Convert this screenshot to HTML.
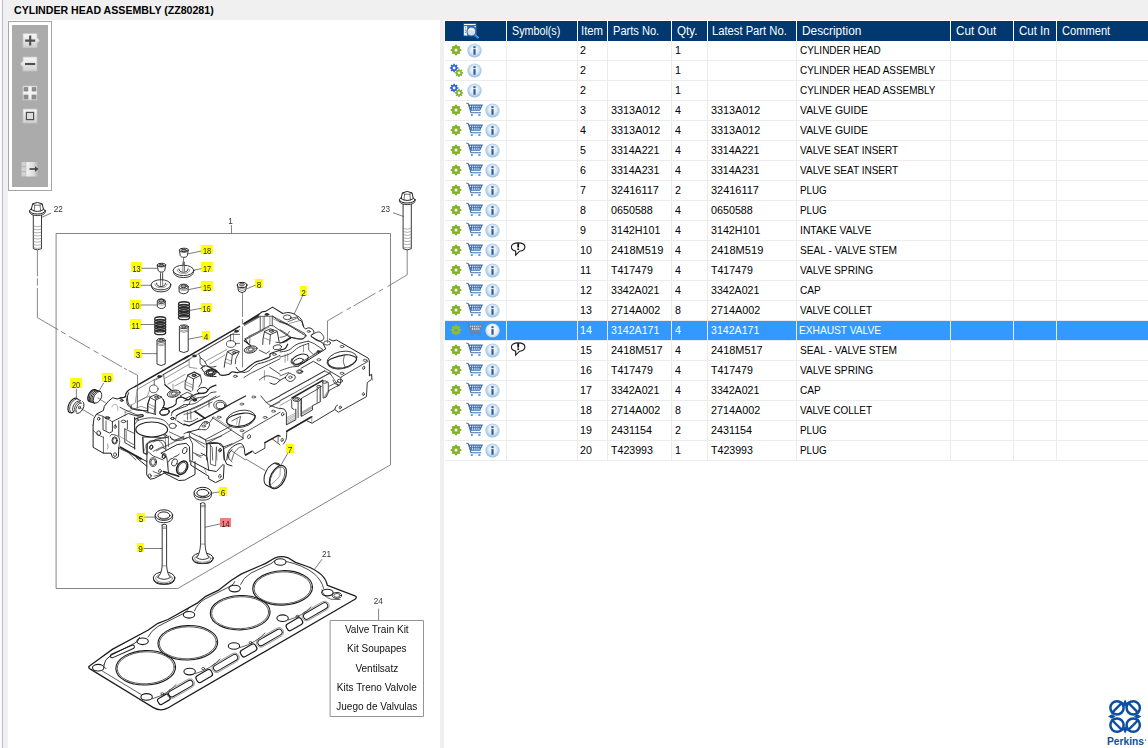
<!DOCTYPE html><html><head><meta charset="utf-8"><title>Parts</title><style>html,body{margin:0;padding:0;}
body{width:1148px;height:748px;overflow:hidden;background:#f0f0f0;position:relative;font-family:"Liberation Sans",sans-serif;font-size:11px;color:#000;}
div,svg{position:absolute;}
.title{height:16px;line-height:16px;font-weight:bold;font-size:11px;white-space:nowrap;transform-origin:0 0;}
#leftpanel{left:8px;top:20px;width:432px;height:728px;background:#fff;}
#leftedge{left:0;top:0;width:2px;height:748px;background:#fbfbfb;border-right:1px solid #bcbccb;}
#rightpanel{left:444px;top:20px;width:704px;height:728px;background:#fff;}
#thead{left:445px;top:21px;width:703px;height:20px;background:#00386f;}
.hs{top:21px;width:1px;height:20px;background:#fff;}
.vs{top:41px;width:1px;height:420px;background:#ececec;}
.hl{left:445px;width:703px;height:1px;background:#ececec;}
.ht{height:20px;line-height:20px;color:#fff;white-space:nowrap;font-size:12px;transform-origin:0 0;}
.ct{height:20px;line-height:20px;white-space:nowrap;transform-origin:0 0;}
.sel{color:#fff;}
.selrow{left:445px;width:703px;height:19px;background:#3399ff;}
.selsep{width:1px;height:19px;background:#ececec;}
.ic{overflow:visible;}
</style></head><body>
<svg width="0" height="0" style="position:absolute"><defs>
<radialGradient id="gi" cx="50%" cy="45%" r="55%"><stop offset="0" stop-color="#ffffff"/><stop offset="0.5" stop-color="#e2ecf6"/><stop offset="0.8" stop-color="#b0cee8"/><stop offset="1" stop-color="#86b5de"/></radialGradient>
<linearGradient id="gb" x1="0" y1="0" x2="0" y2="1"><stop offset="0" stop-color="#f6f6f6"/><stop offset="0.5" stop-color="#e6e6e6"/><stop offset="1" stop-color="#cfcfcf"/></linearGradient>
<linearGradient id="gb2" x1="0" y1="0" x2="1" y2="0"><stop offset="0" stop-color="#f4f4f4"/><stop offset="0.6" stop-color="#dcdcdc"/><stop offset="1" stop-color="#ababab"/></linearGradient>
<g id="i-gear"><path d="M10.05 4.89 L11.22 5.09 L11.22 6.91 L10.05 7.11 L9.65 8.08 L10.34 9.05 L9.05 10.34 L8.08 9.65 L7.11 10.05 L6.91 11.22 L5.09 11.22 L4.89 10.05 L3.92 9.65 L2.95 10.34 L1.66 9.05 L2.35 8.08 L1.95 7.11 L0.78 6.91 L0.78 5.09 L1.95 4.89 L2.35 3.92 L1.66 2.95 L2.95 1.66 L3.92 2.35 L4.89 1.95 L5.09 0.78 L6.91 0.78 L7.11 1.95 L8.08 2.35 L9.05 1.66 L10.34 2.95 L9.65 3.92Z" fill="#7fb325"/><circle cx="6" cy="6" r="1.55" fill="#fff"/></g>
<g id="i-gear-sel"><path d="M10.05 4.89 L11.22 5.09 L11.22 6.91 L10.05 7.11 L9.65 8.08 L10.34 9.05 L9.05 10.34 L8.08 9.65 L7.11 10.05 L6.91 11.22 L5.09 11.22 L4.89 10.05 L3.92 9.65 L2.95 10.34 L1.66 9.05 L2.35 8.08 L1.95 7.11 L0.78 6.91 L0.78 5.09 L1.95 4.89 L2.35 3.92 L1.66 2.95 L2.95 1.66 L3.92 2.35 L4.89 1.95 L5.09 0.78 L6.91 0.78 L7.11 1.95 L8.08 2.35 L9.05 1.66 L10.34 2.95 L9.65 3.92Z" fill="#8fbe2c"/><circle cx="6" cy="6" r="1.5" fill="#4f9de8"/></g>
<g id="i-gears"><path d="M8.09 4.18 L9.34 4.26 L9.34 5.74 L8.09 5.82 L7.79 6.54 L8.62 7.47 L7.57 8.52 L6.64 7.69 L5.92 7.99 L5.84 9.24 L4.36 9.24 L4.28 7.99 L3.56 7.69 L2.63 8.52 L1.58 7.47 L2.41 6.54 L2.11 5.82 L0.86 5.74 L0.86 4.26 L2.11 4.18 L2.41 3.46 L1.58 2.53 L2.63 1.48 L3.56 2.31 L4.28 2.01 L4.36 0.76 L5.84 0.76 L5.92 2.01 L6.64 2.31 L7.57 1.48 L8.62 2.53 L7.79 3.46Z" fill="#2f5fe0"/><circle cx="5.1" cy="5.0" r="1.4" fill="#fff"/><path d="M12.89 9.11 L14.14 9.18 L14.14 10.62 L12.89 10.69 L12.61 11.39 L13.44 12.32 L12.42 13.34 L11.49 12.51 L10.79 12.79 L10.72 14.04 L9.28 14.04 L9.21 12.79 L8.51 12.51 L7.58 13.34 L6.56 12.32 L7.39 11.39 L7.11 10.69 L5.86 10.62 L5.86 9.18 L7.11 9.11 L7.39 8.41 L6.56 7.48 L7.58 6.46 L8.51 7.29 L9.21 7.01 L9.28 5.76 L10.72 5.76 L10.79 7.01 L11.49 7.29 L12.42 6.46 L13.44 7.48 L12.61 8.41Z" fill="#7fb325"/><circle cx="10.0" cy="9.9" r="1.4" fill="#fff"/></g>
<g id="i-info"><circle cx="7.5" cy="7.5" r="7.1" fill="url(#gi)"/><rect x="6.4" y="3.2" width="2.2" height="2" fill="#2d5c9f"/><rect x="6.4" y="6.1" width="2.2" height="5.6" fill="#2d5c9f"/></g>
<radialGradient id="gis" cx="50%" cy="45%" r="55%"><stop offset="0" stop-color="#ffffff"/><stop offset="0.6" stop-color="#f1f4f7"/><stop offset="0.9" stop-color="#cfdae4"/><stop offset="1" stop-color="#b4c6d6"/></radialGradient>
<g id="i-info-sel"><circle cx="7.5" cy="7.5" r="7.1" fill="url(#gis)"/><rect x="6.4" y="3.2" width="2.2" height="2" fill="#2d5c9f"/><rect x="6.4" y="6.1" width="2.2" height="5.6" fill="#2d5c9f"/></g>
<g id="i-cart" fill="none" stroke="#3f6ea8" stroke-width="1.1"><path d="M0.3 0.9 L2.3 1.6 L5.0 10.8 L15.0 10.8" /><path d="M3.0 3.1 L16.2 3.1 L13.8 8.2 L4.9 8.2 Z" fill="#dfe9f5"/><path d="M5.6 3.4V7.8M7.7 3.4V7.8M9.8 3.4V7.8M11.9 3.4V7.8M13.8 3.4V6.8" stroke-width="1"/><path d="M3.8 5.6H15" stroke-width="0.8"/><rect x="4.8" y="12.2" width="2" height="1.7" fill="#3d8de0" stroke="none"/><rect x="12.4" y="12.2" width="2" height="1.7" fill="#3d8de0" stroke="none"/></g>
<g id="i-cart-sel" fill="none" stroke="#6a7f98" stroke-width="1.1"><path d="M0.3 0.9 L2.3 1.6 L5.0 10.8 L15.0 10.8" /><path d="M3.0 3.1 L16.2 3.1 L13.8 8.2 L4.9 8.2 Z" fill="#e8eef5"/><path d="M5.6 3.4V7.8M7.7 3.4V7.8M9.8 3.4V7.8M11.9 3.4V7.8M13.8 3.4V6.8" stroke-width="1"/><path d="M3.8 5.6H15" stroke-width="0.8"/><rect x="4.8" y="12.2" width="2" height="1.7" fill="#5a87b8" stroke="none"/><rect x="12.4" y="12.2" width="2" height="1.7" fill="#5a87b8" stroke="none"/></g>
<g id="i-bubble"><path d="M8.1 1.9 C12.3 1.9 14.9 3.6 14.9 6 C14.9 8.2 12.6 9.8 9.6 10.2 L5.6 14.2 L5.7 10.1 C3 9.6 1.4 8 1.4 6 C1.4 3.6 4 1.9 8.1 1.9 Z" fill="#fff" stroke="#1a1a1a" stroke-width="1.1"/><rect x="7.3" y="2.2" width="1.8" height="4.4" fill="#111"/><rect x="7.3" y="7.4" width="1.8" height="1.6" fill="#111"/></g>
<g id="i-search"><rect x="0.3" y="0.3" width="13.2" height="12.9" fill="#1f78cf"/><rect x="1" y="1" width="11.6" height="1" fill="#fff"/><rect x="1.1" y="3.1" width="3" height="9.3" fill="#fff"/><rect x="11.5" y="3" width="1.2" height="1.2" fill="#fff"/><path d="M2.2 4.3h0.8M2.2 6h0.8M2.2 7.7h0.8M2.2 9.4h0.8" stroke="#1f5fae" stroke-width="0.8"/><line x1="11.2" y1="11.7" x2="15.4" y2="15.2" stroke="#2d7fd6" stroke-width="2"/><line x1="11.8" y1="11.3" x2="15.9" y2="14.7" stroke="#9cc0ea" stroke-width="0.7"/><circle cx="8.4" cy="8.5" r="4.5" fill="#dcdde0" stroke="#1d62b8" stroke-width="1.1"/><path d="M6 6.6 Q8 5.2 10.6 7.2" stroke="#fff" stroke-width="1.2" fill="none"/></g>
</defs></svg>
<div id="leftedge"></div><div id="leftpanel"></div><div id="rightpanel"></div>
<div id="t1" class="title" style="left:13.59px;top:2px;transform:scaleX(0.9626);">CYLINDER HEAD ASSEMBLY (ZZ80281)</div>
<svg style="left:8px;top:21px" width="44" height="170" viewBox="8 21 44 170">
<rect x="8.5" y="21.5" width="43" height="169" fill="#fff" stroke="#a6a6a6"/>
<rect x="12" y="25" width="36" height="162" fill="#ababab"/>
<!-- plus -->
<path d="M23 33.5H37V37.5L39.6 40.5L37 43.5V47.5H23Z" fill="url(#gb)" stroke="#c4c4c4" stroke-width="0.8"/>
<path d="M25.2 40.6H35.2M30.2 35.6V45.6" stroke="#4f4f4f" stroke-width="2.1"/>
<!-- minus -->
<path d="M37 57H23V61L20.4 64L23 67V71H37Z" fill="url(#gb)" stroke="#c4c4c4" stroke-width="0.8"/>
<path d="M25 64H35.2" stroke="#4f4f4f" stroke-width="2.1"/>
<!-- grid -->
<rect x="23" y="86" width="14" height="14" fill="url(#gb)" stroke="#c4c4c4" stroke-width="0.8"/>
<path d="M29.2 86.4H30.8V99.6H29.2ZM23.4 92.2H36.6V93.8H23.4Z" fill="#f6f6f6"/><path d="M24.2 87.4H27.8V91H24.2ZM32.2 87.4H35.8V91H32.2ZM24.2 95.2H27.8V98.8H24.2ZM32.2 95.2H35.8V98.8H32.2Z" fill="#8e8e8e" stroke="#707070" stroke-width="0.6"/>
<!-- square -->
<rect x="23" y="109" width="14" height="14" fill="url(#gb)" stroke="#c4c4c4" stroke-width="0.8"/>
<rect x="26.4" y="112.4" width="7.2" height="7.2" fill="#dcdcdc" stroke="#4e4e4e" stroke-width="1.2"/>
<!-- list arrow -->
<rect x="26" y="162" width="12.5" height="14.5" fill="url(#gb2)"/>
<path d="M21.5 162H26V166.3H21.5ZM21.5 167H26V171.3H21.5ZM21.5 172H26V176.3H21.5Z" fill="#d4d4d4" stroke="#bdbdbd" stroke-width="0.7"/>
<path d="M29.5 169H36" stroke="#444" stroke-width="1.6"/>
<path d="M35 166.2L38.4 169L35 171.8Z" fill="#444"/>
</svg>

<svg id="diagram" style="left:8px;top:190px;will-change:transform;opacity:0.999;font-family:'Liberation Sans',sans-serif" width="432" height="558" viewBox="8 190 432 558" fill="none" stroke-linecap="round" stroke-linejoin="round">
<path d="M120.0 397.9C120.9 397.8 124.1 397.8 125.1 397.1C126.1 396.4 125.4 394.8 126.0 393.6C126.6 392.5 127.0 391.4 128.6 390.2C130.1 389.0 134.3 387.0 135.4 386.4" stroke="#222" stroke-width="1.2" fill="none"/>
<path d="M135.4 386.4L188.4 356.0" stroke="#222" stroke-width="1.5" fill="none"/>
<path d="M137.1 389.5L191.0 358.6" stroke="#444" stroke-width="0.6" fill="none"/>
<path d="M128.6 392.8C128.3 393.8 127.1 396.9 126.8 398.8C126.6 400.6 126.6 402.3 127.3 403.9C128.0 405.5 129.5 407.2 131.1 408.2C132.8 409.2 134.4 409.6 137.1 410.1C139.8 410.5 145.7 410.6 147.4 410.8" stroke="#222" stroke-width="1.0" fill="none"/>
<path d="M131.1 405.6L135.4 402.6L137.1 389.4" stroke="#555" stroke-width="0.6" fill="none"/>
<path d="M131.1 408.2L131.1 404.8" stroke="#222" stroke-width="0.6" fill="none"/>
<ellipse cx="159.4" cy="376.5" rx="1.9" ry="1.0" stroke="#222" stroke-width="0.8" fill="#333"/>
<ellipse cx="121.7" cy="400.5" rx="1.5" ry="0.9" stroke="#222" stroke-width="0.8" fill="none"/>
<path d="M163.6 374.4L188.4 360.3" stroke="#222" stroke-width="0.7" fill="none"/>
<path d="M164.9 378.4L188.4 364.7" stroke="#555" stroke-width="0.6" fill="none"/>
<path d="M154.2 380.0L154.2 384.7" stroke="#222" stroke-width="0.7" fill="none"/>
<path d="M163.6 374.4L164.9 384.7" stroke="#222" stroke-width="0.7" fill="none"/>
<path d="M155.5 380.0L162.8 375.9" stroke="#222" stroke-width="0.6" fill="none"/>
<ellipse cx="153.8" cy="388.9" rx="4.3" ry="3.9" stroke="#222" stroke-width="0.7" fill="none"/>
<path d="M149.5 390.2L147.4 396.2L137.1 402.2" stroke="#555" stroke-width="0.6" fill="none"/>
<path d="M164.9 384.7L171.3 390.2" stroke="#222" stroke-width="1.2" fill="none"/>
<path d="M167.9 384.2L185.0 374.4" stroke="#555" stroke-width="0.6" fill="none"/>
<path d="M173.0 384.2L173.0 388.9" stroke="#555" stroke-width="0.6" fill="none"/>
<path d="M174.8 385.9L185.9 380.0" stroke="#555" stroke-width="0.6" fill="none"/>
<path d="M149.9 397.1L155.9 394.5L161.9 397.1L155.5 400.1Z" stroke="#222" stroke-width="0.9" fill="#fff"/>
<ellipse cx="156.4" cy="397.2" rx="1.9" ry="1.1" stroke="#222" stroke-width="0.8" fill="#bbb"/>
<path d="M149.9 397.8L147.6 403.9L147.4 411.2" stroke="#222" stroke-width="0.9" fill="none"/>
<path d="M155.5 400.3L154.9 407.3L154.2 413.5" stroke="#222" stroke-width="0.8" fill="none"/>
<path d="M161.9 397.8C162.4 398.6 164.3 401.0 164.5 402.6C164.7 404.2 163.4 406.6 163.2 407.3" stroke="#222" stroke-width="0.9" fill="none"/>
<path d="M148.7 403.9L154.7 406.9" stroke="#555" stroke-width="0.6" fill="none"/>
<path d="M148.2 406.5L154.2 409.5" stroke="#555" stroke-width="0.6" fill="none"/>
<path d="M187.6 375.3L194.0 372.3L200.4 375.3L193.6 378.7Z" stroke="#222" stroke-width="0.9" fill="#fff"/>
<ellipse cx="194.0" cy="375.5" rx="1.9" ry="1.1" stroke="#222" stroke-width="0.8" fill="#bbb"/>
<path d="M187.6 375.9L185.2 382.5L185.0 388.5L191.0 391.5" stroke="#222" stroke-width="0.9" fill="none"/>
<path d="M193.6 378.9L192.7 390.2" stroke="#222" stroke-width="0.8" fill="none"/>
<path d="M200.4 375.9C200.6 376.9 201.7 379.8 201.5 381.7C201.2 383.5 199.2 386.1 198.7 387.0" stroke="#222" stroke-width="0.9" fill="none"/>
<path d="M186.3 382.1L192.9 385.3" stroke="#555" stroke-width="0.6" fill="none"/>
<path d="M185.9 384.7L192.7 387.8" stroke="#555" stroke-width="0.6" fill="none"/>
<ellipse cx="173.7" cy="393.6" rx="6.5" ry="3.4" stroke="#222" stroke-width="0.9" fill="none" transform="rotate(-12 173.7 393.6)"/>
<ellipse cx="173.7" cy="393.6" rx="4.6" ry="2.4" stroke="#222" stroke-width="0.55" fill="none" transform="rotate(-12 173.7 393.6)"/>
<ellipse cx="173.7" cy="393.6" rx="2.8" ry="1.5" stroke="#222" stroke-width="0.7" fill="none" transform="rotate(-12 173.7 393.6)"/>
<ellipse cx="164.5" cy="412.0" rx="5.0" ry="2.8" stroke="#222" stroke-width="0.9" fill="none" transform="rotate(-10 164.5 412.0)"/>
<ellipse cx="202.6" cy="390.4" rx="5.1" ry="2.9" stroke="#222" stroke-width="0.9" fill="none" transform="rotate(-10 202.6 390.4)"/>
<ellipse cx="210.9" cy="372.3" rx="4.7" ry="2.6" stroke="#222" stroke-width="0.9" fill="none" transform="rotate(-10 210.9 372.3)"/>
<ellipse cx="210.9" cy="372.3" rx="3.1" ry="1.7" stroke="#222" stroke-width="0.8" fill="none" transform="rotate(-10 210.9 372.3)"/>
<path d="M202.1 368.8C202.5 369.4 203.0 371.0 204.3 372.3C205.6 373.5 207.9 375.4 209.8 376.1C211.8 376.8 215.0 376.5 216.0 376.5" stroke="#222" stroke-width="1.0" fill="none"/>
<path d="M200.4 357.7C201.1 358.3 203.7 360.0 204.7 361.1C205.7 362.3 205.4 363.6 206.4 364.6C207.4 365.6 209.1 366.8 210.7 367.1C212.3 367.4 215.1 366.4 216.0 366.3" stroke="#222" stroke-width="0.9" fill="none"/>
<path d="M162.8 407.3C163.6 407.5 165.8 408.9 167.9 408.4C170.1 407.9 174.2 405.9 175.6 404.3C177.1 402.8 175.6 400.4 176.6 399.2C177.6 398.0 179.6 397.1 181.6 397.2C183.6 397.3 186.9 399.9 188.4 399.8C190.0 399.8 189.8 397.9 191.2 396.9C192.6 395.9 194.6 394.5 197.0 393.8C199.4 393.1 203.4 393.8 205.6 392.8C207.7 391.8 208.3 389.1 210.0 387.8C211.8 386.5 215.0 385.5 216.0 385.1" stroke="#222" stroke-width="1.2" fill="none"/>
<path d="M171.3 415.5C171.7 414.7 171.8 412.1 173.2 410.9C174.6 409.7 177.4 409.4 179.9 408.4C182.4 407.4 186.7 406.2 188.4 404.9C190.2 403.7 189.2 401.8 190.6 400.7C192.0 399.5 194.4 398.8 197.0 398.1C199.6 397.4 204.1 397.1 206.4 396.2C208.7 395.3 209.1 393.5 210.7 392.8C212.3 392.1 215.1 392.1 216.0 391.9" stroke="#222" stroke-width="0.9" fill="none"/>
<path d="M175.6 420.0C175.9 419.2 175.8 416.4 177.3 415.0C178.9 413.6 182.5 412.8 185.0 411.6C187.6 410.5 189.3 409.8 192.7 408.2C196.1 406.6 201.7 404.2 205.6 402.2C209.4 400.2 214.3 397.2 216.0 396.2" stroke="#222" stroke-width="0.8" fill="none"/>
<ellipse cx="194.6" cy="400.1" rx="1.7" ry="1.0" stroke="#222" stroke-width="0.8" fill="#333"/>
<ellipse cx="172.4" cy="418.5" rx="1.9" ry="1.0" stroke="#222" stroke-width="0.8" fill="none"/>
<path d="M180.3 396.2L185.0 398.8L192.7 394.9L187.6 392.4Z" stroke="#222" stroke-width="0.8" fill="none"/>
<path d="M195.3 411.2L203.9 417.6" stroke="#222" stroke-width="1.3" fill="none"/>
<path d="M187.6 411.6L187.6 420.0" stroke="#555" stroke-width="0.6" fill="none"/>
<path d="M191.0 410.8L191.0 420.0" stroke="#555" stroke-width="0.6" fill="none"/>
<path d="M209.0 400.5L209.0 407.3" stroke="#555" stroke-width="0.6" fill="none"/>
<path d="M120.0 407.3L125.1 409.9L137.1 415.0L143.1 415.0L142.7 416.7L137.1 416.9" stroke="#222" stroke-width="0.8" fill="none"/>
<path d="M125.1 410.8L125.1 415.9" stroke="#555" stroke-width="0.6" fill="none"/>
<path d="M184.0 358.8L239.6 326.3" stroke="#222" stroke-width="1.5" fill="none"/>
<path d="M243.9 323.9L258.4 316.0" stroke="#222" stroke-width="1.5" fill="none"/>
<path d="M185.7 361.1L239.6 329.7" stroke="#444" stroke-width="0.6" fill="none"/>
<ellipse cx="194.4" cy="356.0" rx="1.9" ry="1.0" stroke="#222" stroke-width="0.8" fill="#333"/>
<ellipse cx="236.4" cy="331.2" rx="1.9" ry="1.0" stroke="#222" stroke-width="0.8" fill="#333"/>
<path d="M198.5 354.1C198.8 354.6 199.8 355.4 200.1 357.1C200.4 358.7 199.6 362.3 200.3 363.9C200.9 365.5 203.5 366.1 204.1 366.5" stroke="#222" stroke-width="0.8" fill="none"/>
<path d="M189.1 359.8L189.1 367.3L196.8 368.4" stroke="#555" stroke-width="0.6" fill="none"/>
<path d="M199.0 353.6L231.9 334.4L239.6 334.4" stroke="#222" stroke-width="0.7" fill="none"/>
<path d="M230.6 334.4L230.6 341.0" stroke="#222" stroke-width="0.7" fill="none"/>
<path d="M233.5 334.4L233.5 341.0" stroke="#555" stroke-width="0.6" fill="none"/>
<ellipse cx="231.1" cy="344.0" rx="4.7" ry="3.4" stroke="#222" stroke-width="0.7" fill="none"/>
<path d="M205.4 361.3L226.8 349.5" stroke="#555" stroke-width="0.6" fill="none"/>
<path d="M209.7 364.1L225.1 354.9" stroke="#555" stroke-width="0.6" fill="none"/>
<path d="M235.3 343.4L239.6 343.4" stroke="#222" stroke-width="0.6" fill="none"/>
<path d="M227.6 351.5L233.6 349.6L239.2 351.5L232.8 354.7Z" stroke="#222" stroke-width="0.9" fill="#fff"/>
<ellipse cx="234.1" cy="352.6" rx="1.9" ry="1.0" stroke="#222" stroke-width="0.8" fill="#bbb"/>
<path d="M227.2 352.4L225.2 360.5L224.2 367.3" stroke="#222" stroke-width="0.9" fill="none"/>
<path d="M232.3 355.0L231.2 363.9" stroke="#222" stroke-width="0.8" fill="none"/>
<path d="M239.2 351.9L235.8 358.8L235.3 363.9" stroke="#222" stroke-width="0.8" fill="none"/>
<path d="M225.9 358.8L231.5 361.3" stroke="#555" stroke-width="0.6" fill="none"/>
<path d="M225.2 362.2L231.1 364.6" stroke="#555" stroke-width="0.6" fill="none"/>
<ellipse cx="250.7" cy="349.5" rx="6.5" ry="3.4" stroke="#222" stroke-width="0.9" fill="none" transform="rotate(-12 250.7 349.5)"/>
<ellipse cx="210.7" cy="372.5" rx="6.5" ry="3.4" stroke="#222" stroke-width="0.9" fill="none" transform="rotate(-12 210.7 372.5)"/>
<ellipse cx="250.7" cy="349.5" rx="4.6" ry="2.4" stroke="#222" stroke-width="0.55" fill="none" transform="rotate(-12 250.7 349.5)"/>
<ellipse cx="210.7" cy="372.5" rx="4.6" ry="2.4" stroke="#222" stroke-width="0.55" fill="none" transform="rotate(-12 210.7 372.5)"/>
<ellipse cx="250.7" cy="349.5" rx="2.8" ry="1.5" stroke="#222" stroke-width="0.7" fill="none" transform="rotate(-12 250.7 349.5)"/>
<ellipse cx="210.7" cy="372.5" rx="2.8" ry="1.5" stroke="#222" stroke-width="0.7" fill="none" transform="rotate(-12 210.7 372.5)"/>
<path d="M244.3 340.8L249.0 344.2L250.7 345.5" stroke="#222" stroke-width="1.2" fill="none"/>
<path d="M201.1 368.4C201.7 367.9 203.1 366.0 204.5 365.8C206.0 365.6 207.4 366.2 209.7 367.3C212.0 368.5 216.3 371.3 218.2 372.6C220.1 374.0 219.3 374.9 221.0 375.2C222.7 375.5 226.6 374.9 228.5 374.4C230.3 373.8 230.6 372.1 232.1 371.8C233.5 371.5 235.3 372.8 237.2 372.6C239.2 372.5 241.9 371.8 243.9 370.8C245.9 369.7 247.3 367.9 249.2 366.5C251.1 365.1 253.2 363.2 255.2 362.2C257.2 361.2 258.8 361.3 261.2 360.5C263.6 359.6 268.0 358.2 269.6 357.1C271.1 355.9 268.8 354.8 270.6 353.6C272.3 352.5 278.4 350.8 280.0 350.2" stroke="#222" stroke-width="1.2" fill="none"/>
<path d="M236.2 367.3C236.6 367.9 237.5 369.9 238.8 370.8C240.0 371.6 242.2 372.5 243.9 372.5C245.6 372.5 247.6 371.6 249.0 370.8C250.5 369.9 251.0 368.5 252.4 367.3C253.9 366.2 255.6 364.8 257.6 363.9C259.6 363.1 261.9 363.1 264.4 362.2C267.0 361.3 270.4 359.9 273.0 358.8C275.6 357.6 278.8 355.9 280.0 355.4" stroke="#222" stroke-width="0.9" fill="none"/>
<path d="M243.9 377.6C245.0 376.9 247.9 374.9 250.7 373.3C253.6 371.8 256.1 370.6 261.0 368.2C265.9 365.8 276.8 360.3 280.0 358.8" stroke="#222" stroke-width="0.8" fill="none"/>
<path d="M264.4 331.4L270.6 328.8L277.4 331.4L270.6 334.5Z" stroke="#222" stroke-width="0.9" fill="#fff"/>
<ellipse cx="271.3" cy="331.2" rx="2.1" ry="1.1" stroke="#222" stroke-width="0.8" fill="#bbb"/>
<path d="M264.4 332.1L263.1 338.2L262.7 344.4" stroke="#222" stroke-width="0.9" fill="none"/>
<path d="M270.4 334.8L269.6 344.2" stroke="#222" stroke-width="0.8" fill="none"/>
<path d="M277.4 332.1L279.1 341.7" stroke="#222" stroke-width="0.9" fill="none"/>
<path d="M263.6 337.8L270.0 340.4" stroke="#555" stroke-width="0.6" fill="none"/>
<path d="M244.7 340.1L263.6 330.1" stroke="#222" stroke-width="0.7" fill="none"/>
<path d="M244.3 324.6L259.5 316.2" stroke="#555" stroke-width="0.6" fill="none"/>
<path d="M249.9 337.4L249.9 342.5" stroke="#555" stroke-width="0.6" fill="none"/>
<path d="M260.1 316.0L260.1 330.1" stroke="#555" stroke-width="0.6" fill="none"/>
<path d="M264.4 316.0L264.4 328.8" stroke="#555" stroke-width="0.6" fill="none"/>
<path d="M272.1 316.0L272.1 325.0" stroke="#555" stroke-width="0.6" fill="none"/>
<path d="M273.0 318.6L280.0 322.4" stroke="#555" stroke-width="0.6" fill="none"/>
<ellipse cx="274.3" cy="354.3" rx="1.9" ry="1.0" stroke="#222" stroke-width="0.8" fill="none"/>
<ellipse cx="235.3" cy="376.3" rx="1.9" ry="1.0" stroke="#222" stroke-width="0.8" fill="none"/>
<ellipse cx="194.1" cy="375.2" rx="1.9" ry="1.0" stroke="#222" stroke-width="0.8" fill="none"/>
<path d="M187.4 375.2L194.3 371.8L200.4 375.0" stroke="#222" stroke-width="0.8" fill="none"/>
<path d="M259.3 350.2L266.1 353.6L269.6 351.1" stroke="#222" stroke-width="0.8" fill="none"/>
<ellipse cx="277.3" cy="347.2" rx="4.3" ry="2.4" stroke="#222" stroke-width="0.8" fill="none" transform="rotate(-10 277.3 347.2)"/>
<path d="M264.4 370.8L264.4 380.0" stroke="#555" stroke-width="0.6" fill="none"/>
<path d="M269.6 367.3L280.0 374.2" stroke="#222" stroke-width="0.8" fill="none"/>
<path d="M259.3 380.0C260.4 379.3 263.6 376.3 266.1 375.9C268.7 375.5 272.4 376.9 274.7 377.6C277.0 378.3 279.1 379.6 280.0 380.0" stroke="#222" stroke-width="0.8" fill="none"/>
<path d="M329.2 339.1L333.0 341.0L336.5 340.0L368.1 358.1L369.4 360.7L369.4 375.9L371.6 374.2L372.0 380.0" stroke="#222" stroke-width="1.0" fill="none"/>
<path d="M368.1 361.3L340.7 377.2" stroke="#222" stroke-width="0.8" fill="none"/>
<ellipse cx="327.1" cy="343.0" rx="3.4" ry="2.1" stroke="#222" stroke-width="0.8" fill="none"/>
<ellipse cx="342.0" cy="360.1" rx="15.2" ry="8.6" stroke="#222" stroke-width="0.8" fill="none" transform="rotate(-12 342.0 360.1)"/>
<path d="M327.9 362.6C327.6 361.2 328.5 360.1 331.3 358.8C334.2 357.5 341.3 355.4 345.0 354.9C348.7 354.5 351.7 355.5 353.6 356.2C355.5 356.9 356.7 357.9 356.6 359.2C356.4 360.5 354.9 362.5 352.7 363.9C350.5 365.3 346.6 367.2 343.3 367.8C340.0 368.3 335.6 368.2 333.0 367.3C330.5 366.5 328.2 364.1 327.9 362.6Z" stroke="#222" stroke-width="1.1" fill="none"/>
<path d="M344.3 356.2C344.2 357.1 343.2 359.5 343.3 361.3C343.5 363.2 344.9 366.3 345.2 367.3" stroke="#222" stroke-width="0.7" fill="none"/>
<ellipse cx="342.0" cy="346.5" rx="1.9" ry="1.1" stroke="#222" stroke-width="0.7" fill="none"/>
<ellipse cx="365.1" cy="360.3" rx="1.9" ry="1.1" stroke="#222" stroke-width="0.7" fill="none"/>
<ellipse cx="342.0" cy="373.3" rx="1.9" ry="1.1" stroke="#222" stroke-width="0.7" fill="none"/>
<ellipse cx="318.9" cy="359.8" rx="1.9" ry="1.1" stroke="#222" stroke-width="0.7" fill="none"/>
<ellipse cx="363.7" cy="367.8" rx="1.0" ry="1.7" stroke="#222" stroke-width="0.7" fill="none" transform="rotate(20 363.7 367.8)"/>
<path d="M298.0 316.0C298.6 316.7 301.0 318.7 301.8 320.3C302.7 321.8 302.5 324.0 303.1 325.4C303.7 326.8 304.3 328.4 305.2 328.8C306.2 329.2 307.5 327.7 308.7 327.8C309.9 327.9 311.7 328.4 312.5 329.3C313.4 330.1 314.0 331.7 313.8 332.7C313.6 333.7 311.7 334.8 311.2 335.3" stroke="#222" stroke-width="1.0" fill="none"/>
<path d="M311.2 335.3C312.1 334.8 314.9 332.9 316.4 332.4C317.9 332.0 319.0 331.7 320.2 332.4C321.4 333.1 323.2 335.3 323.6 336.5C324.1 337.8 323.8 339.4 322.8 340.1C321.8 340.8 319.6 341.4 317.6 340.8C315.7 340.2 312.3 337.2 311.2 336.5" stroke="#222" stroke-width="0.9" fill="none"/>
<path d="M311.2 336.5L322.8 343.0L325.8 348.9L298.4 366.1" stroke="#222" stroke-width="1.0" fill="none"/>
<path d="M308.2 341.2L314.2 343.6L322.8 349.5L298.0 364.1" stroke="#222" stroke-width="0.8" fill="none"/>
<path d="M280.0 351.9C281.4 351.7 285.7 351.5 288.6 350.2C291.4 348.9 293.8 345.7 297.1 344.2C300.4 342.7 306.4 341.7 308.2 341.2" stroke="#222" stroke-width="0.9" fill="none"/>
<path d="M280.0 357.1C281.7 356.5 287.1 355.3 290.3 353.6C293.4 352.0 295.8 348.9 298.8 347.2C301.9 345.5 307.0 344.0 308.7 343.4" stroke="#222" stroke-width="0.8" fill="none"/>
<path d="M303.5 345.1L303.5 351.9" stroke="#555" stroke-width="0.6" fill="none"/>
<path d="M308.7 343.8L308.7 350.2L313.4 354.5L317.6 351.9" stroke="#222" stroke-width="0.7" fill="none"/>
<ellipse cx="318.5" cy="351.5" rx="1.5" ry="0.9" stroke="#222" stroke-width="0.8" fill="#444"/>
<ellipse cx="300.1" cy="359.2" rx="8.6" ry="4.4" stroke="#222" stroke-width="1.0" fill="none" transform="rotate(-20 300.1 359.2)"/>
<ellipse cx="298.4" cy="361.3" rx="5.1" ry="2.7" stroke="#222" stroke-width="0.8" fill="none" transform="rotate(-20 298.4 361.3)"/>
<path d="M292.0 358.8C291.8 359.4 290.7 361.1 291.1 362.2C291.6 363.3 293.3 365.0 294.5 365.6C295.8 366.3 297.8 366.0 298.4 366.1" stroke="#222" stroke-width="1.0" fill="none"/>
<ellipse cx="299.7" cy="371.6" rx="3.1" ry="1.9" stroke="#222" stroke-width="0.8" fill="none"/>
<ellipse cx="299.7" cy="371.6" rx="1.9" ry="1.1" stroke="#222" stroke-width="0.7" fill="none"/>
<ellipse cx="290.3" cy="377.2" rx="1.7" ry="1.2" stroke="#222" stroke-width="0.7" fill="none"/>
<path d="M301.0 368.2L313.4 361.3L339.9 377.2" stroke="#222" stroke-width="0.9" fill="none"/>
<path d="M308.2 380.0L324.5 370.8" stroke="#222" stroke-width="0.7" fill="none"/>
<path d="M316.8 380.0L330.5 372.6" stroke="#222" stroke-width="0.7" fill="none"/>
<path d="M324.5 370.8L331.3 375.0" stroke="#555" stroke-width="0.6" fill="none"/>
<ellipse cx="287.3" cy="317.3" rx="3.9" ry="2.4" stroke="#222" stroke-width="0.8" fill="none"/>
<ellipse cx="308.7" cy="331.4" rx="1.5" ry="0.9" stroke="#222" stroke-width="0.8" fill="none"/>
<path d="M280.0 321.1C281.7 322.0 286.7 324.3 290.3 326.3C293.8 328.3 298.8 331.5 301.4 333.1C304.0 334.7 305.0 335.3 305.7 335.7" stroke="#222" stroke-width="0.9" fill="none"/>
<path d="M280.0 329.7C281.1 330.4 285.0 332.7 286.8 334.0C288.7 335.3 290.4 336.8 291.1 337.4" stroke="#222" stroke-width="0.8" fill="none"/>
<path d="M280.0 343.4C280.9 343.0 283.3 341.8 285.1 340.8C287.0 339.8 288.4 337.6 291.1 337.4C293.8 337.1 299.0 339.6 301.4 339.3C303.8 339.0 305.0 336.3 305.7 335.7" stroke="#222" stroke-width="0.9" fill="none"/>
<path d="M280.0 337.4C281.0 337.1 284.4 336.7 286.0 335.7C287.6 334.7 288.8 332.1 289.4 331.4" stroke="#222" stroke-width="0.7" fill="none"/>
<path d="M287.7 344.2C287.3 344.9 286.4 347.5 285.1 348.5C283.9 349.5 280.9 349.9 280.0 350.2" stroke="#222" stroke-width="1.2" fill="none"/>
<path d="M285.1 354.5L285.1 362.2" stroke="#555" stroke-width="0.6" fill="none"/>
<path d="M287.7 353.6L287.7 360.5" stroke="#555" stroke-width="0.6" fill="none"/>
<path d="M280.0 370.8C281.7 370.2 287.4 368.0 290.3 367.3C293.1 366.6 296.0 366.6 297.1 366.5" stroke="#222" stroke-width="0.8" fill="none"/>
<path d="M280.0 375.9L288.6 372.5" stroke="#222" stroke-width="0.7" fill="none"/>
<path d="M290.3 318.6L297.1 316.9" stroke="#222" stroke-width="0.7" fill="none"/>
<path d="M286.8 431.3L311.7 416.8" stroke="#222" stroke-width="1.7" fill="none"/>
<path d="M311.7 416.8L311.8 422.8" stroke="#777" stroke-width="0.6" fill="none"/>
<path d="M307.4 421.1L312.1 423.2L334.8 409.5L335.8 406.5L337.5 405.2" stroke="#222" stroke-width="0.9" fill="none"/>
<path d="M334.8 409.5L338.4 412.3L366.4 396.7L367.3 382.6L370.7 380.0" stroke="#222" stroke-width="0.9" fill="none"/>
<ellipse cx="340.3" cy="407.4" rx="1.0" ry="1.5" stroke="#222" stroke-width="0.7" fill="none" transform="rotate(20 340.3 407.4)"/>
<ellipse cx="363.4" cy="394.1" rx="1.0" ry="1.5" stroke="#222" stroke-width="0.7" fill="none" transform="rotate(20 363.4 394.1)"/>
<path d="M286.8 431.3C286.7 432.6 286.7 436.9 286.2 439.0C285.6 441.1 283.9 443.2 283.4 444.0" stroke="#222" stroke-width="0.9" fill="none"/>
<ellipse cx="282.1" cy="439.9" rx="1.0" ry="1.7" stroke="#222" stroke-width="0.7" fill="none" transform="rotate(20 282.1 439.9)"/>
<ellipse cx="282.6" cy="414.2" rx="1.2" ry="1.7" stroke="#222" stroke-width="0.7" fill="none" transform="rotate(20 282.6 414.2)"/>
<path d="M280.0 408.2L284.3 409.1L286.4 412.5L286.4 424.9L295.8 419.8L295.8 409.1" stroke="#222" stroke-width="0.9" fill="none"/>
<path d="M286.8 417.6L295.8 412.9" stroke="#666" stroke-width="0.5" fill="none"/>
<path d="M286.8 419.2L295.8 414.5" stroke="#666" stroke-width="0.5" fill="none"/>
<path d="M286.8 420.7L295.8 416.0" stroke="#666" stroke-width="0.5" fill="none"/>
<path d="M286.8 422.3L295.8 417.6" stroke="#666" stroke-width="0.5" fill="none"/>
<path d="M286.8 423.8L295.8 419.1" stroke="#666" stroke-width="0.5" fill="none"/>
<ellipse cx="296.7" cy="399.5" rx="3.9" ry="1.9" stroke="#222" stroke-width="0.9" fill="none"/>
<ellipse cx="296.7" cy="399.5" rx="1.9" ry="0.9" stroke="#222" stroke-width="0.7" fill="none"/>
<path d="M291.6 400.1L291.8 408.2L294.1 409.5" stroke="#222" stroke-width="0.8" fill="none"/>
<path d="M298.1 401.4L298.1 417.6" stroke="#222" stroke-width="0.8" fill="none"/>
<path d="M300.7 400.1L300.7 415.9" stroke="#555" stroke-width="0.6" fill="none"/>
<path d="M301.4 398.4L301.4 416.4L312.5 409.9L312.5 405.7L320.2 401.8L320.2 386.8" stroke="#222" stroke-width="0.9" fill="none"/>
<path d="M301.4 398.4L318.5 388.6" stroke="#222" stroke-width="0.8" fill="none"/>
<path d="M302.1 414.2L312.3 408.2" stroke="#666" stroke-width="0.5" fill="none"/>
<path d="M302.1 413.5L312.3 407.5" stroke="#666" stroke-width="0.5" fill="none"/>
<path d="M302.1 412.7L312.3 406.7" stroke="#666" stroke-width="0.5" fill="none"/>
<path d="M302.1 411.9L312.3 405.9" stroke="#666" stroke-width="0.5" fill="none"/>
<path d="M292.0 398.0L322.8 380.4" stroke="#222" stroke-width="1.5" fill="none"/>
<ellipse cx="318.9" cy="386.4" rx="2.1" ry="1.0" stroke="#222" stroke-width="0.8" fill="none"/>
<path d="M317.2 387.3L317.2 402.4" stroke="#222" stroke-width="0.7" fill="none"/>
<path d="M320.6 387.3L320.6 401.6" stroke="#555" stroke-width="0.6" fill="none"/>
<ellipse cx="324.9" cy="382.1" rx="2.4" ry="1.2" stroke="#222" stroke-width="0.8" fill="none"/>
<path d="M322.8 382.6L323.2 398.1L326.2 397.1L328.9 391.1" stroke="#222" stroke-width="0.8" fill="none"/>
<path d="M328.3 382.6L328.3 391.1" stroke="#222" stroke-width="0.8" fill="none"/>
<path d="M324.1 397.5L326.6 392.8" stroke="#666" stroke-width="0.5" fill="none"/>
<path d="M324.9 397.0L327.3 392.3" stroke="#666" stroke-width="0.5" fill="none"/>
<path d="M325.8 396.5L328.0 391.8" stroke="#666" stroke-width="0.5" fill="none"/>
<path d="M326.6 396.0L328.7 391.3" stroke="#666" stroke-width="0.5" fill="none"/>
<path d="M280.0 395.4L308.2 380.0" stroke="#222" stroke-width="0.7" fill="none"/>
<path d="M280.0 400.5L292.0 394.1" stroke="#555" stroke-width="0.6" fill="none"/>
<path d="M280.0 405.4L291.1 399.3" stroke="#555" stroke-width="0.6" fill="none"/>
<path d="M327.9 391.1L339.0 385.1" stroke="#222" stroke-width="0.8" fill="none"/>
<path d="M328.8 386.4L338.2 381.7" stroke="#222" stroke-width="0.7" fill="none"/>
<ellipse cx="339.9" cy="380.9" rx="2.6" ry="1.7" stroke="#222" stroke-width="0.8" fill="none"/>
<path d="M333.0 380.0C333.3 380.6 333.8 382.6 334.8 383.4C335.8 384.3 338.3 384.8 339.0 385.1" stroke="#222" stroke-width="0.8" fill="none"/>
<path d="M184.0 411.4C185.9 410.8 191.0 409.7 195.1 408.0C199.3 406.3 204.7 403.1 208.8 401.1C212.9 399.1 218.1 396.9 219.9 396.0" stroke="#222" stroke-width="0.8" fill="none"/>
<path d="M184.0 424.2L189.1 425.9L195.1 422.7L204.5 418.4L212.2 414.4L219.9 410.1L231.9 403.3L245.6 396.0" stroke="#222" stroke-width="1.3" fill="none"/>
<path d="M194.3 411.4L201.1 416.1L205.4 418.4" stroke="#222" stroke-width="1.1" fill="none"/>
<path d="M184.0 414.4C185.4 414.0 189.7 413.3 192.6 412.3C195.4 411.2 197.8 409.7 201.1 408.0C204.4 406.3 210.4 403.0 212.2 402.0" stroke="#222" stroke-width="0.7" fill="none"/>
<ellipse cx="220.4" cy="405.4" rx="4.3" ry="3.3" stroke="#222" stroke-width="0.9" fill="none"/>
<ellipse cx="219.9" cy="405.0" rx="6.2" ry="4.7" stroke="#222" stroke-width="0.8" fill="none"/>
<path d="M187.4 412.3L187.4 419.1" stroke="#555" stroke-width="0.6" fill="none"/>
<path d="M190.4 411.0L190.4 418.2" stroke="#555" stroke-width="0.6" fill="none"/>
<path d="M208.8 401.1L209.2 406.3" stroke="#555" stroke-width="0.6" fill="none"/>
<path d="M184.0 420.8C185.1 421.0 188.6 422.1 190.8 421.7C193.1 421.3 196.5 419.0 197.7 418.4" stroke="#222" stroke-width="0.8" fill="none"/>
<path d="M212.2 417.4L243.0 437.9" stroke="#222" stroke-width="0.8" fill="none"/>
<path d="M213.5 416.5L231.9 428.9" stroke="#666" stroke-width="0.6" fill="none"/>
<path d="M243.0 433.6L243.0 438.8" stroke="#222" stroke-width="0.8" fill="none"/>
<path d="M243.9 433.2L280.0 412.3" stroke="#222" stroke-width="0.8" fill="none"/>
<path d="M189.1 431.9L205.4 439.6L231.9 425.5" stroke="#222" stroke-width="0.8" fill="none"/>
<path d="M205.4 439.6L206.4 443.9" stroke="#222" stroke-width="0.8" fill="none"/>
<path d="M208.8 442.6L231.1 430.2" stroke="#222" stroke-width="0.7" fill="none"/>
<path d="M224.2 448.4L243.0 438.8" stroke="#222" stroke-width="0.8" fill="none"/>
<ellipse cx="240.9" cy="418.9" rx="14.7" ry="8.4" stroke="#222" stroke-width="0.8" fill="none" transform="rotate(-12 240.9 418.9)"/>
<path d="M226.8 420.8C227.1 419.3 229.1 417.4 231.9 416.1C234.8 414.8 240.5 413.4 243.9 413.1C247.3 412.8 250.6 413.7 252.4 414.4C254.3 415.1 255.6 415.9 255.0 417.4C254.4 418.9 251.7 421.9 249.0 423.4C246.3 424.9 241.9 426.1 238.8 426.4C235.6 426.7 232.2 426.0 230.2 425.1C228.2 424.2 226.5 422.3 226.8 420.8Z" stroke="#222" stroke-width="1.1" fill="none"/>
<path d="M231.9 421.0L240.6 416.3L238.8 425.3" stroke="#222" stroke-width="0.7" fill="none"/>
<path d="M237.5 417.8L236.6 424.2" stroke="#888" stroke-width="0.6" fill="none"/>
<ellipse cx="219.1" cy="417.2" rx="1.9" ry="1.0" stroke="#222" stroke-width="0.7" fill="none"/>
<ellipse cx="241.8" cy="404.1" rx="1.9" ry="1.0" stroke="#222" stroke-width="0.7" fill="none"/>
<ellipse cx="265.1" cy="417.4" rx="1.9" ry="1.0" stroke="#222" stroke-width="0.7" fill="none"/>
<ellipse cx="242.0" cy="430.7" rx="1.9" ry="1.0" stroke="#222" stroke-width="0.7" fill="none"/>
<ellipse cx="273.4" cy="411.2" rx="1.9" ry="1.0" stroke="#222" stroke-width="0.7" fill="none"/>
<ellipse cx="253.7" cy="397.0" rx="1.9" ry="1.0" stroke="#222" stroke-width="0.7" fill="none"/>
<ellipse cx="249.0" cy="436.6" rx="1.4" ry="2.1" stroke="#222" stroke-width="0.7" fill="none" transform="rotate(25 249.0 436.6)"/>
<ellipse cx="203.7" cy="426.1" rx="1.7" ry="1.0" stroke="#222" stroke-width="0.7" fill="none"/>
<ellipse cx="205.8" cy="423.2" rx="1.7" ry="1.0" stroke="#222" stroke-width="0.7" fill="none"/>
<path d="M198.5 429.4C198.5 428.6 200.1 426.4 201.1 425.1C202.1 423.8 203.3 421.9 204.5 421.5C205.8 421.1 208.0 421.8 208.8 422.5C209.6 423.3 209.6 424.8 209.2 425.9C208.8 427.1 207.7 428.9 206.4 429.5C205.1 430.1 202.9 429.6 201.5 429.5C200.2 429.5 198.6 430.1 198.5 429.4Z" stroke="#222" stroke-width="0.9" fill="none"/>
<path d="M187.4 432.4L198.5 429.4" stroke="#222" stroke-width="1.0" fill="none"/>
<path d="M209.7 422.5L213.1 417.8" stroke="#222" stroke-width="0.8" fill="none"/>
<path d="M264.9 442.6L278.1 435.4L280.0 436.2" stroke="#222" stroke-width="1.4" fill="none"/>
<path d="M264.9 442.6L264.9 448.2L255.0 453.8L252.4 450.8L245.6 455.0" stroke="#222" stroke-width="0.9" fill="none"/>
<path d="M245.6 455.0L251.6 451.6" stroke="#222" stroke-width="1.6" fill="none"/>
<path d="M278.1 435.4L278.1 442.2" stroke="#222" stroke-width="0.7" fill="none"/>
<path d="M272.1 438.8L280.0 444.8" stroke="#222" stroke-width="0.8" fill="none"/>
<path d="M226.8 460.0C227.1 458.6 227.4 453.9 228.5 451.6C229.6 449.3 231.6 447.4 233.6 446.1C235.6 444.7 238.8 443.3 240.5 443.5C242.2 443.7 243.2 445.6 243.9 447.3C244.6 449.1 244.7 453.0 244.9 454.2" stroke="#222" stroke-width="1.0" fill="none"/>
<path d="M231.9 460.0C232.3 458.7 233.2 454.6 234.5 452.5C235.8 450.4 238.2 448.2 239.6 447.3C241.0 446.5 242.5 447.3 243.0 447.3" stroke="#222" stroke-width="0.7" fill="none"/>
<path d="M231.5 450.8L245.6 460.0" stroke="#444" stroke-width="0.7" fill="none"/>
<path d="M206.7 443.5L206.7 460.0" stroke="#222" stroke-width="0.9" fill="none"/>
<path d="M206.7 443.5C207.6 443.3 210.0 442.6 212.2 442.6C214.4 442.6 218.1 442.7 219.9 443.5C221.8 444.3 222.6 444.6 223.4 447.3C224.1 450.1 224.1 457.9 224.2 460.0" stroke="#222" stroke-width="1.0" fill="none"/>
<ellipse cx="219.9" cy="450.3" rx="1.3" ry="1.7" stroke="#222" stroke-width="0.7" fill="none" transform="rotate(20 219.9 450.3)"/>
<path d="M209.7 444.8L212.2 447.3L212.7 460.0" stroke="#222" stroke-width="0.7" fill="none"/>
<path d="M216.5 447.3L216.9 460.0" stroke="#555" stroke-width="0.6" fill="none"/>
<path d="M184.0 433.6L188.3 431.9" stroke="#222" stroke-width="0.8" fill="none"/>
<path d="M184.0 438.8L189.1 437.1L192.6 443.9L192.6 460.0" stroke="#222" stroke-width="0.8" fill="none"/>
<path d="M189.1 431.9L190.0 437.1L205.4 444.3" stroke="#222" stroke-width="0.7" fill="none"/>
<path d="M192.6 452.5L201.1 455.9L204.5 454.2" stroke="#222" stroke-width="0.7" fill="none"/>
<path d="M261.0 396.0C261.7 396.9 263.7 399.6 265.3 401.1C266.9 402.7 268.0 404.1 270.4 405.4C272.9 406.7 278.4 408.3 280.0 408.8" stroke="#222" stroke-width="0.9" fill="none"/>
<path d="M266.1 402.8L280.0 396.0" stroke="#222" stroke-width="0.7" fill="none"/>
<path d="M269.6 407.1L280.0 402.0" stroke="#222" stroke-width="0.7" fill="none"/>
<path d="M184.0 401.1C184.9 400.8 187.3 400.1 189.1 399.4C191.0 398.7 194.1 397.3 195.1 396.9" stroke="#222" stroke-width="0.9" fill="none"/>
<ellipse cx="194.7" cy="399.9" rx="1.9" ry="1.0" stroke="#222" stroke-width="0.8" fill="#444"/>
<path d="M184.0 404.6C185.7 404.4 191.4 404.6 194.3 403.7C197.1 402.8 199.1 400.7 201.1 399.4C203.1 398.1 205.4 396.6 206.2 396.0" stroke="#222" stroke-width="0.8" fill="none"/>
<path d="M93.1 425.1L94.0 418.2L96.6 414.0L103.4 410.5L104.3 406.3L108.5 401.1L112.8 397.7L117.1 399.0L123.9 397.3L125.6 396.0" stroke="#222" stroke-width="1.0" fill="none"/>
<path d="M93.1 425.1L93.1 447.3L103.4 453.2L111.1 453.2L112.4 457.2L115.4 458.5L118.4 456.7L118.8 447.3" stroke="#222" stroke-width="1.0" fill="none"/>
<path d="M103.4 437.1L103.4 453.2" stroke="#222" stroke-width="0.7" fill="none"/>
<ellipse cx="98.7" cy="418.7" rx="1.2" ry="1.5" stroke="#222" stroke-width="0.8" fill="none" transform="rotate(15 98.7 418.7)"/>
<ellipse cx="98.7" cy="433.2" rx="1.9" ry="2.4" stroke="#222" stroke-width="0.9" fill="none"/>
<path d="M96.6 414.4L102.5 416.1L112.4 421.7" stroke="#222" stroke-width="0.7" fill="none"/>
<path d="M103.0 416.5L103.0 429.8L109.4 433.0L112.4 431.5L112.4 421.7" stroke="#222" stroke-width="0.9" fill="none"/>
<path d="M106.0 420.8L106.0 430.2" stroke="#222" stroke-width="0.7" fill="none"/>
<ellipse cx="107.3" cy="417.8" rx="2.4" ry="1.2" stroke="#222" stroke-width="0.8" fill="none"/>
<ellipse cx="106.1" cy="417.8" rx="0.8" ry="0.6" stroke="#222" stroke-width="0.6" fill="none"/>
<ellipse cx="108.4" cy="417.8" rx="0.8" ry="0.6" stroke="#222" stroke-width="0.6" fill="none"/>
<path d="M112.4 421.7L128.2 413.5L135.9 415.7L142.8 414.4L143.6 416.1L135.9 418.7" stroke="#222" stroke-width="0.9" fill="none"/>
<path d="M118.8 420.8L118.8 436.2" stroke="#222" stroke-width="0.9" fill="none"/>
<path d="M127.4 420.4L127.4 428.9" stroke="#222" stroke-width="0.8" fill="none"/>
<ellipse cx="123.5" cy="421.4" rx="2.4" ry="1.2" stroke="#222" stroke-width="0.8" fill="none"/>
<path d="M115.4 424.2L115.4 426.8" stroke="#222" stroke-width="0.6" fill="none"/>
<ellipse cx="115.2" cy="426.8" rx="1.2" ry="1.7" stroke="#222" stroke-width="0.7" fill="none"/>
<path d="M93.1 430.2C93.7 430.8 95.3 432.6 96.6 433.6C97.8 434.6 99.7 435.6 100.8 436.2C102.0 436.8 103.0 436.9 103.4 437.1" stroke="#222" stroke-width="0.7" fill="none"/>
<path d="M107.7 443.9L108.1 447.3L107.3 449.0" stroke="#555" stroke-width="0.6" fill="none"/>
<ellipse cx="151.7" cy="429.5" rx="15.9" ry="7.5" stroke="#222" stroke-width="1.2" fill="none"/>
<path d="M134.6 424.2C135.4 423.5 136.6 421.0 139.3 420.0C142.1 418.9 147.3 417.8 151.3 417.8C155.3 417.8 160.4 418.7 163.3 420.0C166.1 421.2 167.6 424.2 168.4 425.1" stroke="#222" stroke-width="0.8" fill="none"/>
<path d="M134.6 417.4L134.6 449.0" stroke="#222" stroke-width="1.1" fill="none"/>
<path d="M124.8 428.9L124.8 442.6L134.9 448.4" stroke="#222" stroke-width="0.9" fill="none"/>
<path d="M124.8 428.9L134.6 433.6" stroke="#222" stroke-width="0.7" fill="none"/>
<path d="M126.5 431.1L126.5 440.5L134.2 444.8" stroke="#666" stroke-width="0.6" fill="none"/>
<path d="M119.7 436.2L134.9 445.6" stroke="#666" stroke-width="0.6" fill="none"/>
<ellipse cx="114.7" cy="440.5" rx="2.7" ry="3.6" stroke="#222" stroke-width="0.9" fill="none"/>
<ellipse cx="114.7" cy="440.5" rx="1.9" ry="2.6" stroke="#222" stroke-width="0.8" fill="none"/>
<ellipse cx="115.0" cy="454.6" rx="1.5" ry="1.9" stroke="#222" stroke-width="0.8" fill="none"/>
<path d="M110.2 436.2C110.5 435.9 110.7 434.5 112.0 434.5C113.2 434.5 116.7 435.2 117.9 436.2C119.2 437.2 119.5 438.6 119.7 440.5C119.8 442.3 118.9 446.2 118.8 447.3" stroke="#222" stroke-width="0.8" fill="none"/>
<path d="M120.5 447.3L141.0 458.9" stroke="#222" stroke-width="1.8" fill="none"/>
<path d="M118.8 448.2L128.2 452.5L135.9 460.0" stroke="#222" stroke-width="0.7" fill="none"/>
<path d="M142.8 437.1L143.6 452.5L147.0 454.6L147.0 443.9L156.4 439.2L167.6 437.2" stroke="#222" stroke-width="0.9" fill="none"/>
<path d="M142.8 437.1L165.0 437.9L168.4 437.1" stroke="#222" stroke-width="0.7" fill="none"/>
<path d="M144.5 450.8L146.2 443.9" stroke="#555" stroke-width="0.6" fill="none"/>
<ellipse cx="151.1" cy="447.3" rx="1.5" ry="2.2" stroke="#222" stroke-width="0.8" fill="none" transform="rotate(15 151.1 447.3)"/>
<path d="M153.0 442.2C153.9 441.9 156.6 440.2 158.2 440.5C159.7 440.8 161.6 442.8 162.4 443.9C163.3 445.1 163.2 446.8 163.3 447.3" stroke="#222" stroke-width="0.7" fill="none"/>
<path d="M156.4 450.8L161.6 448.2L184.0 437.1" stroke="#222" stroke-width="0.7" fill="none"/>
<path d="M165.4 433.6L165.4 447.3" stroke="#666" stroke-width="0.6" fill="none"/>
<path d="M168.4 436.2L168.4 446.5" stroke="#222" stroke-width="0.7" fill="none"/>
<ellipse cx="172.7" cy="418.4" rx="1.9" ry="1.1" stroke="#222" stroke-width="0.7" fill="none"/>
<ellipse cx="172.7" cy="425.9" rx="3.6" ry="2.6" stroke="#222" stroke-width="0.8" fill="none"/>
<ellipse cx="136.8" cy="419.3" rx="1.4" ry="0.9" stroke="#222" stroke-width="0.7" fill="none"/>
<ellipse cx="165.4" cy="435.5" rx="1.4" ry="0.9" stroke="#222" stroke-width="0.7" fill="none"/>
<ellipse cx="164.6" cy="412.3" rx="4.7" ry="3.0" stroke="#222" stroke-width="0.9" fill="none" transform="rotate(-10 164.6 412.3)"/>
<path d="M170.1 437.1L174.4 440.5L184.0 436.2" stroke="#222" stroke-width="0.8" fill="none"/>
<path d="M169.3 431.9L184.0 438.8" stroke="#222" stroke-width="0.7" fill="none"/>
<path d="M147.9 451.6L153.0 455.9L163.3 460.0" stroke="#222" stroke-width="0.8" fill="none"/>
<ellipse cx="164.1" cy="455.9" rx="1.9" ry="2.6" stroke="#222" stroke-width="0.8" fill="none" transform="rotate(15 164.1 455.9)"/>
<path d="M127.4 396.0C127.5 397.1 127.4 400.8 128.2 402.8C129.1 404.8 130.1 406.7 132.5 408.0C134.9 409.3 140.2 409.7 142.8 410.5C145.3 411.4 147.0 412.7 147.9 413.1" stroke="#222" stroke-width="0.9" fill="none"/>
<path d="M137.2 396.0L137.2 408.0" stroke="#555" stroke-width="0.6" fill="none"/>
<path d="M138.5 401.1L149.6 396.0" stroke="#555" stroke-width="0.6" fill="none"/>
<path d="M149.6 398.6L147.9 404.6L147.9 412.3L155.6 414.4" stroke="#222" stroke-width="0.9" fill="none"/>
<path d="M155.6 400.3L155.6 414.4" stroke="#222" stroke-width="0.7" fill="none"/>
<path d="M163.3 399.4C163.4 400.3 164.4 402.8 164.1 404.6C163.9 406.3 162.0 408.8 161.6 409.7" stroke="#222" stroke-width="0.9" fill="none"/>
<path d="M125.6 412.3L141.0 406.3L147.9 408.8" stroke="#555" stroke-width="0.6" fill="none"/>
<path d="M171.9 412.3C172.7 411.7 175.0 410.1 177.0 408.8C179.0 407.6 182.8 405.3 184.0 404.6" stroke="#222" stroke-width="1.0" fill="none"/>
<path d="M176.1 415.7L184.0 411.4" stroke="#222" stroke-width="0.9" fill="none"/>
<path d="M177.0 420.8L184.0 425.1" stroke="#222" stroke-width="1.0" fill="none"/>
<ellipse cx="121.8" cy="400.3" rx="1.2" ry="0.8" stroke="#222" stroke-width="0.7" fill="none"/>
<path d="M112.0 407.1C112.2 406.7 112.8 404.8 113.7 404.6C114.5 404.3 116.4 404.4 117.1 405.4C117.8 406.4 117.8 409.7 117.9 410.5" stroke="#777" stroke-width="0.6" fill="none"/>
<path d="M147.1 444.1L146.7 474.9L150.1 479.2L154.4 478.4L164.2 473.2" stroke="#222" stroke-width="1.0" fill="none"/>
<path d="M147.1 444.1C147.6 443.6 147.8 441.8 150.1 441.1C152.4 440.5 158.3 440.0 160.8 440.3C163.3 440.6 164.2 441.2 165.1 442.8C165.9 444.5 165.8 448.9 165.9 450.1" stroke="#222" stroke-width="0.9" fill="none"/>
<path d="M161.2 453.1L177.1 444.6L186.1 443.3L189.5 446.7L189.9 461.7" stroke="#222" stroke-width="1.0" fill="none"/>
<path d="M161.2 453.1L166.8 457.4L168.5 472.8" stroke="#222" stroke-width="0.9" fill="none"/>
<path d="M142.8 437.7L143.3 453.1L146.7 454.4" stroke="#222" stroke-width="0.8" fill="none"/>
<path d="M153.1 451.4L161.7 447.1L165.1 448.8" stroke="#222" stroke-width="0.7" fill="none"/>
<ellipse cx="151.4" cy="447.1" rx="1.4" ry="2.1" stroke="#222" stroke-width="0.8" fill="none" transform="rotate(20 151.4 447.1)"/>
<ellipse cx="163.8" cy="456.5" rx="1.4" ry="2.1" stroke="#222" stroke-width="0.8" fill="none" transform="rotate(20 163.8 456.5)"/>
<ellipse cx="153.1" cy="462.1" rx="3.4" ry="4.3" stroke="#222" stroke-width="0.9" fill="none"/>
<ellipse cx="153.1" cy="462.1" rx="2.3" ry="3.2" stroke="#222" stroke-width="0.8" fill="none"/>
<ellipse cx="149.7" cy="475.8" rx="1.5" ry="1.9" stroke="#222" stroke-width="0.8" fill="none"/>
<ellipse cx="160.0" cy="471.1" rx="1.3" ry="1.8" stroke="#222" stroke-width="0.8" fill="none" transform="rotate(15 160.0 471.1)"/>
<ellipse cx="184.8" cy="450.5" rx="2.1" ry="3.4" stroke="#222" stroke-width="0.8" fill="none" transform="rotate(25 184.8 450.5)"/>
<ellipse cx="174.5" cy="462.5" rx="2.6" ry="3.8" stroke="#222" stroke-width="0.8" fill="none" transform="rotate(25 174.5 462.5)"/>
<ellipse cx="182.2" cy="467.7" rx="5.0" ry="7.2" stroke="#222" stroke-width="1.4" fill="none" transform="rotate(30 182.2 467.7)"/>
<ellipse cx="182.2" cy="467.8" rx="3.8" ry="5.8" stroke="#222" stroke-width="0.8" fill="none" transform="rotate(30 182.2 467.8)"/>
<path d="M168.5 461.7L170.2 459.1L172.8 458.4L174.9 456.5L177.1 455.9L179.2 454.1" stroke="#222" stroke-width="0.9" fill="none"/>
<path d="M168.1 461.7L168.1 468.5" stroke="#666" stroke-width="0.6" fill="none"/>
<path d="M164.2 473.0L178.8 480.5L184.8 480.1L195.0 474.5L195.0 461.7" stroke="#222" stroke-width="1.0" fill="none"/>
<path d="M163.4 471.5L178.8 476.2" stroke="#222" stroke-width="1.5" fill="none"/>
<path d="M153.1 471.5L160.8 474.5L154.0 476.2" stroke="#222" stroke-width="0.7" fill="none"/>
<path d="M136.0 455.7L147.1 461.7" stroke="#222" stroke-width="1.0" fill="none"/>
<path d="M136.0 457.4L147.1 466.4" stroke="#222" stroke-width="1.0" fill="none"/>
<path d="M207.0 443.7L218.1 443.3L223.3 447.1L224.1 458.2L226.7 464.2L232.0 465.9" stroke="#222" stroke-width="1.0" fill="none"/>
<path d="M207.0 443.7L206.6 455.7" stroke="#222" stroke-width="0.9" fill="none"/>
<path d="M223.3 447.1L232.0 443.7" stroke="#222" stroke-width="0.8" fill="none"/>
<path d="M190.8 460.8L208.7 470.2L216.4 471.5L223.3 464.2" stroke="#222" stroke-width="1.0" fill="none"/>
<path d="M190.8 461.7L190.8 465.1L208.7 476.2L208.7 478.8L215.6 482.6L223.3 478.8L224.1 465.1" stroke="#222" stroke-width="1.0" fill="none"/>
<ellipse cx="220.3" cy="450.1" rx="1.0" ry="1.7" stroke="#222" stroke-width="0.7" fill="none" transform="rotate(15 220.3 450.1)"/>
<ellipse cx="219.9" cy="476.2" rx="1.2" ry="1.9" stroke="#222" stroke-width="0.7" fill="none" transform="rotate(15 219.9 476.2)"/>
<path d="M201.0 453.1L207.0 456.5L208.7 470.2" stroke="#222" stroke-width="0.9" fill="none"/>
<path d="M210.4 444.6L210.4 464.2L215.6 465.9L216.4 447.1" stroke="#222" stroke-width="0.7" fill="none"/>
<path d="M204.4 468.5L206.2 472.8" stroke="#555" stroke-width="0.6" fill="none"/>
<path d="M189.0 436.0L204.4 447.1" stroke="#222" stroke-width="0.7" fill="none"/>
<path d="M199.3 436.0L207.0 441.1L221.6 436.0" stroke="#222" stroke-width="0.7" fill="none"/>
<path d="M170.2 436.0C170.5 436.6 170.2 438.7 171.9 439.4C173.6 440.1 177.9 440.6 180.5 440.3C183.1 440.0 186.2 438.1 187.3 437.7" stroke="#222" stroke-width="0.8" fill="none"/>
<path d="M192.5 447.1L192.5 460.0" stroke="#666" stroke-width="0.6" fill="none"/>
<path d="M195.9 454.8L201.0 457.4" stroke="#222" stroke-width="0.7" fill="none"/>
<path d="M232.0 449.7C231.5 450.3 229.8 451.7 229.3 453.1C228.7 454.5 228.4 456.8 228.8 458.2C229.3 459.7 231.5 461.1 232.0 461.7" stroke="#222" stroke-width="1.0" fill="none"/>
<path d="M244.3 323.4L258.8 314.4" stroke="#222" stroke-width="1.5" fill="none"/>
<path d="M258.8 314.4L262.2 311.8L265.6 311.4L272.5 307.1L282.8 313.5" stroke="#222" stroke-width="1.1" fill="none"/>
<path d="M282.8 313.5C283.6 313.4 286.0 312.5 287.9 312.5C289.7 312.6 292.3 313.1 293.9 313.8C295.5 314.5 296.6 315.6 297.3 316.5C298.0 317.4 297.6 318.4 298.3 319.3C299.1 320.1 300.9 320.4 301.8 321.7C302.6 322.9 303.2 325.9 303.5 326.8" stroke="#222" stroke-width="1.0" fill="none"/>
<path d="M244.3 325.5L260.5 316.4L272.5 316.2L287.9 324.2" stroke="#222" stroke-width="0.7" fill="none"/>
<ellipse cx="266.9" cy="314.4" rx="1.9" ry="1.0" stroke="#222" stroke-width="0.8" fill="#333"/>
<path d="M260.5 316.5L260.5 329.5" stroke="#555" stroke-width="0.6" fill="none"/>
<path d="M263.1 316.5L263.1 328.7" stroke="#555" stroke-width="0.6" fill="none"/>
<path d="M269.9 316.5L269.9 325.3" stroke="#555" stroke-width="0.6" fill="none"/>
<path d="M272.5 316.5L272.5 325.3" stroke="#555" stroke-width="0.6" fill="none"/>
<path d="M287.9 321.7L296.4 318.4" stroke="#222" stroke-width="0.7" fill="none"/>
<path d="M289.6 323.4L299.0 320.8" stroke="#555" stroke-width="0.6" fill="none"/>
<path d="M272.5 316.2L281.0 322.5L287.9 324.2L305.0 333.6L306.3 336.2L303.3 338.8L296.4 338.8L289.6 337.1" stroke="#222" stroke-width="0.8" fill="none"/>
<path d="M245.1 338.8L269.9 325.5L273.3 325.9L289.6 337.1" stroke="#222" stroke-width="0.8" fill="none"/>
<path d="M245.1 338.8L248.5 344.1" stroke="#222" stroke-width="1.0" fill="none"/>
<path d="M249.4 340.5L249.4 344.9" stroke="#555" stroke-width="0.6" fill="none"/>
<path d="M248.5 336.2L269.1 327.2" stroke="#555" stroke-width="0.6" fill="none"/>
<path d="M282.8 342.2L290.5 338.1" stroke="#222" stroke-width="1.3" fill="none"/>
<path d="M275.9 342.2C277.1 342.3 280.8 342.9 282.8 342.6C284.8 342.3 287.0 340.8 287.9 340.5" stroke="#222" stroke-width="0.8" fill="none"/>
<path d="M285.4 377.4C285.8 376.2 288.1 373.7 289.3 373.3C290.4 372.8 291.5 374.2 292.4 374.6C293.4 375.0 294.6 374.9 295.0 375.7C295.4 376.4 295.4 378.1 294.6 379.1C293.9 380.1 292.0 381.3 290.7 381.5C289.5 381.7 288.0 380.8 287.1 380.1C286.2 379.4 285.0 378.5 285.4 377.4Z" stroke="#222" stroke-width="0.9" fill="none"/>
<path d="M270.0 401.3L324.8 371.0" stroke="#222" stroke-width="0.7" fill="none"/>
<path d="M270.0 406.5L329.9 373.1" stroke="#222" stroke-width="0.7" fill="none"/>
<path d="M341.0 377.4L340.3 384.2L337.6 386.1" stroke="#222" stroke-width="0.8" fill="none"/>
<path d="M329.9 373.1L333.3 378.2L338.4 385.9" stroke="#222" stroke-width="0.7" fill="none"/>
<path d="M270.0 382.9C270.9 383.2 273.4 384.7 275.1 384.2C276.8 383.8 278.6 381.3 280.3 380.1C282.0 379.0 284.5 377.8 285.4 377.4" stroke="#222" stroke-width="1.0" fill="none"/>
<path d="M324.8 371.0L329.9 373.1" stroke="#555" stroke-width="0.6" fill="none"/>
<path d="M231.5 225.5V233.5" stroke="#777" stroke-width="0.9" fill="none" />
<path d="M56.5 233.5H390.5V464.8L177.8 588.5H56.5Z" stroke="#777" stroke-width="0.9" fill="none" />
<text x="230.5" y="224.3" text-anchor="middle" font-size="8.2" fill="#333">1</text>
<path d="M33.3 214.0V248.7Q37.4 251.1 41.5 248.7V214.0" stroke="#222" stroke-width="0.9" fill="#fff" />
<path d="M33.3 226.0Q37.4 227.6 41.5 226.0" stroke="#777" stroke-width="0.6" fill="none" />
<path d="M33.3 229.1Q37.4 230.7 41.5 229.1" stroke="#777" stroke-width="0.6" fill="none" />
<path d="M33.3 232.2Q37.4 233.8 41.5 232.2" stroke="#777" stroke-width="0.6" fill="none" />
<path d="M33.3 235.3Q37.4 236.9 41.5 235.3" stroke="#777" stroke-width="0.6" fill="none" />
<path d="M33.3 238.4Q37.4 240.0 41.5 238.4" stroke="#777" stroke-width="0.6" fill="none" />
<path d="M33.3 241.5Q37.4 243.1 41.5 241.5" stroke="#777" stroke-width="0.6" fill="none" />
<path d="M33.3 244.6Q37.4 246.2 41.5 244.6" stroke="#777" stroke-width="0.6" fill="none" />
<path d="M33.3 247.7Q37.4 249.3 41.5 247.7" stroke="#777" stroke-width="0.6" fill="none" />
<path d="M29.6 210.8V212.2Q30.4 215.4 37.4 215.6Q44.4 215.4 45.2 212.2V210.8" stroke="#222" stroke-width="0.9" fill="#fff" />
<ellipse cx="37.4" cy="210.8" rx="7.8" ry="3.2" stroke="#222" stroke-width="1.0" fill="#fff"/>
<path d="M31.3 209.6L32.6 203.9Q37.4 201.0 42.2 203.9L43.5 209.6Q37.4 213.4 31.3 209.6Z" stroke="#222" stroke-width="1.0" fill="#fff" />
<path d="M32.6 203.9L34.8 205.2H40.0L42.2 203.9M34.8 205.2L34.1 211.1M40.0 205.2L40.7 211.1" stroke="#333" stroke-width="0.7" fill="none" />
<path d="M403.1 203.0V248.7Q407.2 251.1 411.3 248.7V203.0" stroke="#222" stroke-width="0.9" fill="#fff" />
<path d="M403.1 228.5Q407.2 230.1 411.3 228.5" stroke="#777" stroke-width="0.6" fill="none" />
<path d="M403.1 231.6Q407.2 233.2 411.3 231.6" stroke="#777" stroke-width="0.6" fill="none" />
<path d="M403.1 234.7Q407.2 236.3 411.3 234.7" stroke="#777" stroke-width="0.6" fill="none" />
<path d="M403.1 237.8Q407.2 239.4 411.3 237.8" stroke="#777" stroke-width="0.6" fill="none" />
<path d="M403.1 240.9Q407.2 242.5 411.3 240.9" stroke="#777" stroke-width="0.6" fill="none" />
<path d="M403.1 244.0Q407.2 245.6 411.3 244.0" stroke="#777" stroke-width="0.6" fill="none" />
<path d="M403.1 247.1Q407.2 248.7 411.3 247.1" stroke="#777" stroke-width="0.6" fill="none" />
<path d="M399.4 199.8V201.2Q400.2 204.4 407.2 204.6Q414.2 204.4 415.0 201.2V199.8" stroke="#222" stroke-width="0.9" fill="#fff" />
<ellipse cx="407.2" cy="199.8" rx="7.8" ry="3.2" stroke="#222" stroke-width="1.0" fill="#fff"/>
<path d="M401.1 198.6L402.4 192.9Q407.2 190.0 412.0 192.9L413.3 198.6Q407.2 202.4 401.1 198.6Z" stroke="#222" stroke-width="1.0" fill="#fff" />
<path d="M402.4 192.9L404.6 194.2H409.8L412.0 192.9M404.6 194.2L403.9 200.1M409.8 194.2L410.5 200.1" stroke="#333" stroke-width="0.7" fill="none" />
<text x="53.8" y="212.2" text-anchor="start" font-size="8.2" fill="#333">22</text>
<path d="M41.7 217.4L50.7 213.3" stroke="#444" stroke-width="0.7" />
<text x="381.0" y="212.2" text-anchor="start" font-size="8.2" fill="#333">23</text>
<path d="M393.4 212.9L403.4 216.4" stroke="#444" stroke-width="0.7" />
<path d="M37.4 250.6V275.9M37.4 278.7V285.2M37.4 288.4V317.6L58 329.6M61.3 331.5L65.4 334.1M69.2 336.4L89.8 348.3M93.9 350.8L98.2 353.2M101.9 355.4L121.6 366.7M124.5 368.4L126.5 369.5M129.1 370.8L137.5 375.3V408" stroke="#555" stroke-width="0.7" fill="none" />
<path d="M407.2 250.2V274.8L387.8 286.4M382.7 289.2L379 291.4M375.2 293.3L353.8 305.9M350.7 307.5L346.9 309.6M342.5 312.1L327.5 320.9V342.5" stroke="#555" stroke-width="0.7" fill="none" />
<rect x="201" y="245" width="12" height="9" fill="#ffff00"/>
<text x="207.0" y="253.5" text-anchor="middle" font-size="8.2" fill="#262626" textLength="8.2" lengthAdjust="spacingAndGlyphs">18</text>
<rect x="201" y="262" width="12" height="10" fill="#ffff00"/>
<text x="207.0" y="271.5" text-anchor="middle" font-size="8.2" fill="#262626" textLength="8.2" lengthAdjust="spacingAndGlyphs">17</text>
<rect x="131" y="262" width="11" height="10" fill="#ffff00"/>
<text x="136.5" y="271.5" text-anchor="middle" font-size="8.2" fill="#262626" textLength="8.2" lengthAdjust="spacingAndGlyphs">13</text>
<rect x="130" y="279" width="11" height="9" fill="#ffff00"/>
<text x="135.5" y="287.5" text-anchor="middle" font-size="8.2" fill="#262626" textLength="8.2" lengthAdjust="spacingAndGlyphs">12</text>
<rect x="201" y="281" width="12" height="10" fill="#ffff00"/>
<text x="207.0" y="290.5" text-anchor="middle" font-size="8.2" fill="#262626" textLength="8.2" lengthAdjust="spacingAndGlyphs">15</text>
<rect x="130" y="300" width="11" height="9" fill="#ffff00"/>
<text x="135.5" y="308.5" text-anchor="middle" font-size="8.2" fill="#262626" textLength="8.2" lengthAdjust="spacingAndGlyphs">10</text>
<rect x="201" y="303" width="11" height="9" fill="#ffff00"/>
<text x="206.5" y="311.5" text-anchor="middle" font-size="8.2" fill="#262626" textLength="8.2" lengthAdjust="spacingAndGlyphs">16</text>
<rect x="130" y="319" width="11" height="10" fill="#ffff00"/>
<text x="135.5" y="328.5" text-anchor="middle" font-size="8.2" fill="#262626" textLength="8.2" lengthAdjust="spacingAndGlyphs">11</text>
<rect x="255" y="279" width="8" height="9" fill="#ffff00"/>
<text x="259.0" y="287.5" text-anchor="middle" font-size="8.2" fill="#262626" textLength="4.6" lengthAdjust="spacingAndGlyphs">8</text>
<rect x="202" y="331" width="8" height="9" fill="#ffff00"/>
<text x="206.0" y="339.5" text-anchor="middle" font-size="8.2" fill="#262626" textLength="4.6" lengthAdjust="spacingAndGlyphs">4</text>
<rect x="134" y="349" width="8" height="9" fill="#ffff00"/>
<text x="138.0" y="357.5" text-anchor="middle" font-size="8.2" fill="#262626" textLength="4.6" lengthAdjust="spacingAndGlyphs">3</text>
<rect x="300" y="286" width="7" height="10" fill="#ffff00"/>
<text x="303.5" y="295.5" text-anchor="middle" font-size="8.2" fill="#262626" textLength="4.6" lengthAdjust="spacingAndGlyphs">2</text>
<rect x="102" y="373" width="11" height="9" fill="#ffff00"/>
<text x="107.5" y="381.5" text-anchor="middle" font-size="8.2" fill="#262626" textLength="8.2" lengthAdjust="spacingAndGlyphs">19</text>
<rect x="70" y="378" width="12" height="10" fill="#ffff00"/>
<text x="76.0" y="387.5" text-anchor="middle" font-size="8.2" fill="#262626" textLength="8.2" lengthAdjust="spacingAndGlyphs">20</text>
<rect x="286" y="444" width="8" height="9" fill="#ffff00"/>
<text x="290.0" y="452.5" text-anchor="middle" font-size="8.2" fill="#262626" textLength="4.6" lengthAdjust="spacingAndGlyphs">7</text>
<rect x="219" y="487" width="8" height="9" fill="#ffff00"/>
<text x="223.0" y="495.5" text-anchor="middle" font-size="8.2" fill="#262626" textLength="4.6" lengthAdjust="spacingAndGlyphs">6</text>
<rect x="137" y="513" width="8" height="9" fill="#ffff00"/>
<text x="141.0" y="521.5" text-anchor="middle" font-size="8.2" fill="#262626" textLength="4.6" lengthAdjust="spacingAndGlyphs">5</text>
<rect x="137" y="543" width="7" height="9" fill="#ffff00"/>
<text x="140.5" y="551.5" text-anchor="middle" font-size="8.2" fill="#262626" textLength="4.6" lengthAdjust="spacingAndGlyphs">9</text>
<rect x="220" y="518" width="11" height="9" fill="#f47c7c"/>
<text x="225.5" y="526.5" text-anchor="middle" font-size="8.2" fill="#262626" textLength="8.2" lengthAdjust="spacingAndGlyphs">14</text>
<path d="M188.2 253.8L201.0 251.1" stroke="#444" stroke-width="0.7" />
<path d="M193.9 270.2L201.0 268.7" stroke="#444" stroke-width="0.7" />
<path d="M142.0 268.3L157.3 268.3" stroke="#444" stroke-width="0.7" />
<path d="M141.1 285.3L151.2 285.3" stroke="#444" stroke-width="0.7" />
<path d="M188.2 289.7L201.0 287.1" stroke="#444" stroke-width="0.7" />
<path d="M141.1 305.0L157.3 305.0" stroke="#444" stroke-width="0.7" />
<path d="M190.1 310.4L201.0 308.3" stroke="#444" stroke-width="0.7" />
<path d="M141.1 324.5L154.2 324.5" stroke="#444" stroke-width="0.7" />
<path d="M246.9 288.8L255.1 285.3" stroke="#444" stroke-width="0.7" />
<path d="M188.2 339.2L202.0 336.6" stroke="#444" stroke-width="0.7" />
<path d="M142.0 353.6L157.0 353.6" stroke="#444" stroke-width="0.7" />
<path d="M302.3 296.4L294.2 314.0" stroke="#444" stroke-width="0.7" />
<path d="M211.5 493.2L219.0 492.0" stroke="#444" stroke-width="0.7" />
<path d="M205.2 527.2L219.9 524.0" stroke="#444" stroke-width="0.7" />
<path d="M145.1 517.1L154.9 517.1" stroke="#444" stroke-width="0.7" />
<path d="M144.1 548.5L162.1 548.5" stroke="#444" stroke-width="0.7" />
<path d="M183.5 258V270" stroke="#444" stroke-width="0.7" fill="none" />
<path d="M160.5 272.5V284M162.6 272.5V284" stroke="#444" stroke-width="0.7" fill="none" />
<path d="M173.2 270.4Q173.2 277.5 183.5 277.6Q193.8 277.5 193.8 270.4" stroke="#222" stroke-width="0.9" fill="#fff" />
<ellipse cx="183.5" cy="270.4" rx="10.3" ry="5.2" stroke="#222" stroke-width="0.9" fill="#fff"/>
<path d="M178.9 268.8Q178.9 272.0 183.5 272.2Q188.1 272.0 188.1 268.8" stroke="#222" stroke-width="0.9" fill="none" />
<path d="M177.1 269.6Q177.3 273.2 183.5 273.5Q189.7 273.2 189.9 269.6" stroke="#555" stroke-width="0.6" fill="none" />
<path d="M151.2 284.8Q151.2 291.8 161.0 291.9Q170.8 291.8 170.8 284.8" stroke="#222" stroke-width="0.9" fill="#fff" />
<ellipse cx="161.0" cy="284.8" rx="9.8" ry="5.1" stroke="#222" stroke-width="0.9" fill="#fff"/>
<path d="M156.6 283.2Q156.6 286.4 161.0 286.6Q165.4 286.4 165.4 283.2" stroke="#222" stroke-width="0.9" fill="none" />
<path d="M154.9 284.0Q155.1 287.6 161.0 287.9Q166.9 287.6 167.1 284.0" stroke="#555" stroke-width="0.6" fill="none" />
<path d="M182.9 262V271M184.5 262V271" stroke="#444" stroke-width="0.7" fill="none" />
<path d="M160.5 274V285.5M162.6 274V285.5" stroke="#444" stroke-width="0.7" fill="none" />
<path d="M179.4 250.2L180.2 255.3C180.4 258.0 187.2 258.0 187.4 255.3L188.2 250.2" stroke="#222" stroke-width="0.9" fill="#fff" />
<ellipse cx="183.8" cy="250.2" rx="4.5" ry="2.0" stroke="#222" stroke-width="1.0" fill="#fff"/>
<ellipse cx="183.8" cy="250.5" rx="2.7" ry="1.2" stroke="#222" stroke-width="0.8" fill="#999"/>
<path d="M157.2 265.1L158.1 270.1C158.2 272.7 164.6 272.7 164.8 270.1L165.6 265.1" stroke="#222" stroke-width="0.9" fill="#fff" />
<ellipse cx="161.4" cy="265.1" rx="4.2" ry="1.8" stroke="#222" stroke-width="1.0" fill="#fff"/>
<ellipse cx="161.4" cy="265.4" rx="2.5" ry="1.1" stroke="#222" stroke-width="0.8" fill="#999"/>
<path d="M179.1 287.0V292.0Q183.6 295.6 188.1 292.0V287.0" stroke="#222" stroke-width="0.9" fill="#fff" />
<ellipse cx="183.6" cy="286.6" rx="4.5" ry="2.4" stroke="#222" stroke-width="0.9" fill="#fff"/>
<ellipse cx="183.6" cy="286.2" rx="2.8" ry="1.5" stroke="#222" stroke-width="0.9" fill="#aaa"/>
<path d="M179.1 289.2Q183.6 292.2 188.1 289.2" stroke="#666" stroke-width="0.6" fill="none" />
<path d="M157.3 301.6V306.8Q161.3 310.4 165.3 306.8V301.6" stroke="#222" stroke-width="0.9" fill="#fff" />
<ellipse cx="161.3" cy="301.2" rx="4.0" ry="2.4" stroke="#222" stroke-width="0.9" fill="#fff"/>
<ellipse cx="161.3" cy="300.8" rx="2.5" ry="1.5" stroke="#222" stroke-width="0.9" fill="#aaa"/>
<path d="M157.3 303.8Q161.3 306.8 165.3 303.8" stroke="#666" stroke-width="0.6" fill="none" />
<ellipse cx="184.0" cy="304.0" rx="5.5" ry="2.2" stroke="#2a2a2a" stroke-width="1.4" fill="none"/>
<ellipse cx="184.0" cy="306.7" rx="5.5" ry="2.2" stroke="#2a2a2a" stroke-width="1.4" fill="none"/>
<ellipse cx="184.0" cy="309.4" rx="5.5" ry="2.2" stroke="#2a2a2a" stroke-width="1.4" fill="none"/>
<ellipse cx="184.0" cy="312.0" rx="5.5" ry="2.2" stroke="#2a2a2a" stroke-width="1.4" fill="none"/>
<ellipse cx="184.0" cy="314.7" rx="5.5" ry="2.2" stroke="#2a2a2a" stroke-width="1.4" fill="none"/>
<ellipse cx="184.0" cy="317.4" rx="5.5" ry="2.2" stroke="#2a2a2a" stroke-width="1.4" fill="none"/>
<ellipse cx="160.2" cy="319.0" rx="5.5" ry="2.2" stroke="#2a2a2a" stroke-width="1.4" fill="none"/>
<ellipse cx="160.2" cy="321.7" rx="5.5" ry="2.2" stroke="#2a2a2a" stroke-width="1.4" fill="none"/>
<ellipse cx="160.2" cy="324.4" rx="5.5" ry="2.2" stroke="#2a2a2a" stroke-width="1.4" fill="none"/>
<ellipse cx="160.2" cy="327.0" rx="5.5" ry="2.2" stroke="#2a2a2a" stroke-width="1.4" fill="none"/>
<ellipse cx="160.2" cy="329.7" rx="5.5" ry="2.2" stroke="#2a2a2a" stroke-width="1.4" fill="none"/>
<ellipse cx="160.2" cy="332.4" rx="5.5" ry="2.2" stroke="#2a2a2a" stroke-width="1.4" fill="none"/>
<path d="M179.4 326.8V351.1Q183.8 354.0 188.2 351.1V326.8" stroke="#222" stroke-width="0.9" fill="#fff" />
<ellipse cx="183.8" cy="326.8" rx="4.4" ry="1.9" stroke="#222" stroke-width="0.9" fill="#fff"/>
<ellipse cx="183.8" cy="326.8" rx="2.4" ry="1.1" stroke="#222" stroke-width="0.8" fill="#bbb"/>
<path d="M179.4 329.8Q183.8 332.4 188.2 329.8" stroke="#555" stroke-width="0.6" fill="none" />
<path d="M179.4 331.2Q183.8 333.8 188.2 331.2" stroke="#555" stroke-width="0.6" fill="none" />
<path d="M157.0 340.3V364.1Q161.1 367.0 165.2 364.1V340.3" stroke="#222" stroke-width="0.9" fill="#fff" />
<ellipse cx="161.1" cy="340.3" rx="4.1" ry="1.9" stroke="#222" stroke-width="0.9" fill="#fff"/>
<ellipse cx="161.1" cy="340.3" rx="2.3" ry="1.1" stroke="#222" stroke-width="0.8" fill="#bbb"/>
<path d="M157.0 343.3Q161.1 345.9 165.2 343.3" stroke="#555" stroke-width="0.6" fill="none" />
<path d="M157.0 344.7Q161.1 347.3 165.2 344.7" stroke="#555" stroke-width="0.6" fill="none" />
<path d="M237.3 285.2L238.6 291.2Q242 294.2 245.4 291.2L246.8 285.2" stroke="#222" stroke-width="0.9" fill="#fff" />
<ellipse cx="242.1" cy="285.0" rx="4.8" ry="2.6" stroke="#222" stroke-width="1.0" fill="#fff"/>
<path d="M239.6 284.4L240.8 283.2H243.3L244.5 284.4L243.3 285.9H240.8Z" stroke="#222" stroke-width="0.7" fill="#aaa" />
<path d="M237.8 287.6Q242 290.2 246.3 287.6M238.2 289.4Q242 292 245.9 289.4" stroke="#555" stroke-width="0.6" fill="none" />
<path d="M242.5 293.6V316.5M242.5 319.5V324M242.5 327V367" stroke="#555" stroke-width="0.7" fill="none" />
<ellipse cx="92.2" cy="395.6" rx="3.6" ry="6.6" stroke="#222" stroke-width="1.0" fill="#fff" transform="rotate(28 92.2 395.6)"/>
<path d="M95.3 389.8L99.6 391.4L96.4 403L89.2 401.4Z" stroke="none" stroke-width="0" fill="#fff" />
<path d="M95.30 389.77A3.60 6.60 28 0 0 89.10 401.43" stroke="#222" stroke-width="1.0" fill="none" />
<path d="M96.65 390.22A3.60 6.60 28 0 0 90.45 401.88" stroke="#222" stroke-width="1.0" fill="none" />
<path d="M98.00 390.67A3.60 6.60 28 0 0 91.80 402.33" stroke="#222" stroke-width="1.0" fill="none" />
<path d="M99.35 391.12A3.60 6.60 28 0 0 93.15 402.78" stroke="#222" stroke-width="1.0" fill="none" />
<path d="M100.70 391.57A3.60 6.60 28 0 0 94.50 403.23" stroke="#222" stroke-width="1.0" fill="none" />
<path d="M95.3 389.8L100.2 391.6M89.0 401.4L94.6 403.4" stroke="#222" stroke-width="0.9" fill="none" />
<path d="M100.71 392.03A3.40 6.20 28 0 1 94.89 402.97" stroke="#222" stroke-width="0.9" fill="none" />
<path d="M103.5 383.3L99.1 390.8" stroke="#444" stroke-width="0.7" />
<path d="M97.9 397.9L105.4 402.8" stroke="#444" stroke-width="0.7" />
<ellipse cx="73.4" cy="405.5" rx="4.6" ry="7.9" stroke="#222" stroke-width="1.2" fill="#fff" transform="rotate(28 73.4 405.5)"/>
<path d="M78.37 399.19A4.40 7.60 28 0 0 71.23 412.61" stroke="#222" stroke-width="0.8" fill="none" />
<path d="M77.0 398.6L80.0 400.0L79.8 412L73.4 412.6Z" stroke="none" stroke-width="0" fill="#fff" />
<path d="M79.51 401.13A3.40 6.20 28 0 0 73.69 412.07" stroke="#222" stroke-width="0.9" fill="none" />
<path d="M80.63 402.06A3.00 5.60 28 0 0 75.37 411.94" stroke="#222" stroke-width="0.8" fill="none" />
<path d="M81.55 402.99A2.60 5.00 28 0 0 76.85 411.81" stroke="#222" stroke-width="0.8" fill="none" />
<path d="M77.0 398.8L80.6 400.6" stroke="#222" stroke-width="0.9" fill="none" />
<path d="M82.70 401.57A3.60 6.60 28 0 1 76.50 413.23" stroke="#222" stroke-width="1.0" fill="none" />
<ellipse cx="79.5" cy="407.4" rx="1.0" ry="1.5" stroke="#222" stroke-width="0.7" fill="none" transform="rotate(28 79.5 407.4)"/>
<path d="M76.4 389.0L76.4 397.6" stroke="#444" stroke-width="0.7" />
<path d="M79.8 407.8L93.4 415.9" stroke="#444" stroke-width="0.7" />
<path d="M194.1 492.6V495.2Q194.6 500.0 202.8 500.2Q211.0 500.0 211.5 495.2V492.6" stroke="#222" stroke-width="0.9" fill="#fff" />
<ellipse cx="202.8" cy="492.6" rx="8.7" ry="5.3" stroke="#222" stroke-width="1.0" fill="#fff"/>
<ellipse cx="202.8" cy="493.0" rx="6.0" ry="3.6" stroke="#222" stroke-width="1.0" fill="#fff"/>
<path d="M197.2 494.2Q202.8 498.2 208.4 494.2" stroke="#555" stroke-width="0.6" fill="none" />
<path d="M155.2 515.1V517.7Q155.7 522.5 163.9 522.7Q172.1 522.5 172.6 517.7V515.1" stroke="#222" stroke-width="0.9" fill="#fff" />
<ellipse cx="163.9" cy="515.1" rx="8.7" ry="5.3" stroke="#222" stroke-width="1.0" fill="#fff"/>
<ellipse cx="163.9" cy="515.5" rx="6.0" ry="3.6" stroke="#222" stroke-width="1.0" fill="#fff"/>
<path d="M158.3 516.7Q163.9 520.7 169.5 516.7" stroke="#555" stroke-width="0.6" fill="none" />
<path d="M192.3 558.1Q192.3 564.2 202.8 563.6Q213.2 564.2 213.2 558.1" stroke="#222" stroke-width="1.0" fill="#fff" />
<ellipse cx="202.8" cy="558.1" rx="10.4" ry="5.3" stroke="#222" stroke-width="1.0" fill="#fff"/>
<ellipse cx="202.8" cy="558.5" rx="8.2" ry="3.7" stroke="#555" stroke-width="0.6" fill="none"/>
<path d="M200.6 503.4V544.1Q199.8 555.1 196.3 557.5Q202.8 561.5 209.2 557.5Q205.8 555.1 205.0 544.1V503.4Q202.8 501.6 200.6 503.4Z" stroke="#222" stroke-width="0.9" fill="#fff" />
<path d="M200.6 505.4H205.0M200.6 506.8H205.0" stroke="#555" stroke-width="0.6" fill="none" />
<path d="M200.4 544.1H205.2" stroke="#555" stroke-width="0.6" fill="none" />
<path d="M153.3 577.9Q153.3 584.9 164.1 584.3Q174.8 584.9 174.8 577.9" stroke="#222" stroke-width="1.0" fill="#fff" />
<ellipse cx="164.1" cy="577.9" rx="10.8" ry="6.1" stroke="#222" stroke-width="1.0" fill="#fff"/>
<ellipse cx="164.1" cy="578.3" rx="8.4" ry="4.3" stroke="#555" stroke-width="0.6" fill="none"/>
<path d="M162.2 525.0V565.8Q161.4 574.9 157.4 577.3Q164.1 581.3 170.7 577.3Q167.4 574.9 166.6 565.8V525.0Q164.4 523.2 162.2 525.0Z" stroke="#222" stroke-width="0.9" fill="#fff" />
<path d="M162.2 527.0H166.6M162.2 528.4H166.6" stroke="#555" stroke-width="0.6" fill="none" />
<path d="M162.0 565.8H166.8" stroke="#555" stroke-width="0.6" fill="none" />
<path d="M246.0 459.1L264.7 470.3" stroke="#444" stroke-width="0.7" />
<ellipse cx="272.6" cy="474.6" rx="7.3" ry="12.4" stroke="#222" stroke-width="1.0" fill="#fff" transform="rotate(27 272.6 474.6)"/>
<path d="M274.9 463.4L280.4 466.0M265.2 484.2L270.6 487.4" stroke="#222" stroke-width="0.9" fill="none" />
<path d="M274.9 463.4L280.4 466.0L283.5 481L270.6 487.4L265.2 484.2Z" stroke="none" stroke-width="0" fill="#fff" />
<path d="M274.9 463.4L280.4 466.0M265.2 484.2L270.6 487.4" stroke="#222" stroke-width="0.9" fill="none" />
<ellipse cx="277.9" cy="477.1" rx="7.2" ry="12.5" stroke="#222" stroke-width="1.2" fill="#fff" transform="rotate(27 277.9 477.1)"/>
<ellipse cx="277.5" cy="477.3" rx="6.0" ry="11.3" stroke="#333" stroke-width="0.7" fill="none" transform="rotate(27 277.5 477.3)"/>
<path d="M280.4 467L280 475.2L278.2 478.2L271.6 484.2" stroke="#666" stroke-width="0.6" fill="none" />
<path d="M287.9 453.1L280.8 465.4" stroke="#444" stroke-width="0.7" />
<path d="M89.2 666.2Q88 667.4 89.6 668.6L153.4 707.6Q160.4 711.8 167.4 708.2L355 599.2Q357.6 597.4 355 595.8L327.4 585.4C325.8 577 318 570.4 306 566L295.5 562.4L288 557.8Q281.6 555.6 275.2 557.8L265.3 563.6L241.5 573.9L231.4 580.2L218.2 590.4L205.7 596.3L198.1 602.6L168 619.5L157.9 623.3L147.9 630.2L112.7 649.1L100.1 658.2Z" stroke="#1c1c1c" stroke-width="1.3" fill="none"/>
<path d="M104 664.4Q104.6 659.4 110.6 655.6L134 643.6Q139 641.4 139.6 637.6" stroke="#1c1c1c" stroke-width="0.9" fill="none"/>
<path d="M104 664.4Q103 667 106 668.8" stroke="#1c1c1c" stroke-width="0.8" fill="none"/>
<path d="M148 637Q150.8 631 158 626.4L184 613.2Q188 611 188.6 608" stroke="#1c1c1c" stroke-width="0.8" fill="none"/>
<path d="M194.6 610.8Q197 604 205 599L230 586.4Q234.4 584 234.8 581.6" stroke="#1c1c1c" stroke-width="0.8" fill="none"/>
<path d="M240.6 584.4Q243 578 251 573L271 563.6Q274 562 274.8 560.6" stroke="#1c1c1c" stroke-width="0.8" fill="none"/>
<path d="M286.6 561.6Q303 565 314 573.6Q322 580.6 323.6 588.4" stroke="#1c1c1c" stroke-width="0.8" fill="none"/>
<ellipse cx="145.7" cy="667.8" rx="29.9" ry="17.2" stroke="#1c1c1c" stroke-width="1.1" fill="none" transform="rotate(-2 145.7 667.8)"/>
<ellipse cx="145.7" cy="667.8" rx="28.5" ry="16.0" stroke="#333" stroke-width="0.8" fill="none" transform="rotate(-2 145.7 667.8)"/>
<ellipse cx="187.8" cy="642.8" rx="29.9" ry="17.2" stroke="#1c1c1c" stroke-width="1.1" fill="none" transform="rotate(-2 187.8 642.8)"/>
<ellipse cx="187.8" cy="642.8" rx="28.5" ry="16.0" stroke="#333" stroke-width="0.8" fill="none" transform="rotate(-2 187.8 642.8)"/>
<ellipse cx="240.2" cy="612.7" rx="29.9" ry="17.2" stroke="#1c1c1c" stroke-width="1.1" fill="none" transform="rotate(-2 240.2 612.7)"/>
<ellipse cx="240.2" cy="612.7" rx="28.5" ry="16.0" stroke="#333" stroke-width="0.8" fill="none" transform="rotate(-2 240.2 612.7)"/>
<ellipse cx="282.6" cy="587.9" rx="29.9" ry="17.2" stroke="#1c1c1c" stroke-width="1.1" fill="none" transform="rotate(-2 282.6 587.9)"/>
<ellipse cx="282.6" cy="587.9" rx="28.5" ry="16.0" stroke="#333" stroke-width="0.8" fill="none" transform="rotate(-2 282.6 587.9)"/>
<ellipse cx="98.2" cy="667.7" rx="5.7" ry="3.3" stroke="#1c1c1c" stroke-width="1.1" fill="none"/>
<ellipse cx="142.6" cy="641.3" rx="5.7" ry="3.3" stroke="#1c1c1c" stroke-width="1.1" fill="none"/>
<ellipse cx="189.0" cy="614.8" rx="5.7" ry="3.3" stroke="#1c1c1c" stroke-width="1.1" fill="none"/>
<ellipse cx="234.6" cy="588.6" rx="5.7" ry="3.3" stroke="#1c1c1c" stroke-width="1.1" fill="none"/>
<ellipse cx="280.3" cy="562.0" rx="5.7" ry="3.3" stroke="#1c1c1c" stroke-width="1.1" fill="none"/>
<ellipse cx="327.4" cy="592.6" rx="5.7" ry="3.3" stroke="#1c1c1c" stroke-width="1.1" fill="none"/>
<ellipse cx="282.6" cy="618.2" rx="5.7" ry="3.3" stroke="#1c1c1c" stroke-width="1.1" fill="none"/>
<ellipse cx="234.0" cy="646.0" rx="5.7" ry="3.3" stroke="#1c1c1c" stroke-width="1.1" fill="none"/>
<ellipse cx="189.6" cy="671.6" rx="5.7" ry="3.3" stroke="#1c1c1c" stroke-width="1.1" fill="none"/>
<ellipse cx="146.6" cy="696.9" rx="5.7" ry="3.3" stroke="#1c1c1c" stroke-width="1.1" fill="none"/>
<ellipse cx="337.0" cy="595.4" rx="4.6" ry="2.9" stroke="#1c1c1c" stroke-width="0.9" fill="none"/>
<ellipse cx="337.0" cy="595.4" rx="3.2" ry="1.9" stroke="#1c1c1c" stroke-width="0.7" fill="none"/>
<path d="M322 589.6Q322.6 596.6 331 599.2L340 599.6" stroke="#1c1c1c" stroke-width="0.7" fill="none"/>
<rect x="109.4" y="649.6" width="26.0" height="3.6" rx="1.8" stroke="#1c1c1c" stroke-width="1.0" fill="none" transform="rotate(-24 122.4 651.4)"/>
<rect x="167.3" y="685.5" width="27.0" height="6.2" rx="3.1" stroke="#1c1c1c" stroke-width="1.0" fill="none" transform="rotate(-30 180.8 688.6)"/>
<rect x="165.8" y="684.1" width="30.0" height="9.0" rx="4.5" stroke="#666" stroke-width="0.6" fill="none" transform="rotate(-30 180.8 688.6)"/>
<rect x="212.1" y="659.7" width="27.0" height="6.2" rx="3.1" stroke="#1c1c1c" stroke-width="1.0" fill="none" transform="rotate(-30 225.6 662.8)"/>
<rect x="210.6" y="658.3" width="30.0" height="9.0" rx="4.5" stroke="#666" stroke-width="0.6" fill="none" transform="rotate(-30 225.6 662.8)"/>
<rect x="256.5" y="634.3" width="27.0" height="6.2" rx="3.1" stroke="#1c1c1c" stroke-width="1.0" fill="none" transform="rotate(-30 270.0 637.4)"/>
<rect x="255.0" y="632.9" width="30.0" height="9.0" rx="4.5" stroke="#666" stroke-width="0.6" fill="none" transform="rotate(-30 270.0 637.4)"/>
<rect x="302.1" y="607.9" width="27.0" height="6.2" rx="3.1" stroke="#1c1c1c" stroke-width="1.0" fill="none" transform="rotate(-30 315.6 611.0)"/>
<rect x="300.6" y="606.5" width="30.0" height="9.0" rx="4.5" stroke="#666" stroke-width="0.6" fill="none" transform="rotate(-30 315.6 611.0)"/>
<rect x="157.6" y="696.0" width="12.5" height="6.6" rx="2.2" stroke="#1c1c1c" stroke-width="1.2" fill="none" transform="rotate(-30 163.8 699.3)"/>
<rect x="195.7" y="672.3" width="17.0" height="7.4" rx="2.6" stroke="#1c1c1c" stroke-width="1.2" fill="none" transform="rotate(-30 204.2 676.0)"/>
<rect x="240.1" y="646.7" width="17.0" height="7.4" rx="2.6" stroke="#1c1c1c" stroke-width="1.2" fill="none" transform="rotate(-30 248.6 650.4)"/>
<rect x="285.9" y="620.5" width="17.0" height="7.4" rx="2.6" stroke="#1c1c1c" stroke-width="1.2" fill="none" transform="rotate(-30 294.4 624.2)"/>
<ellipse cx="162.3" cy="693.8" rx="1.5" ry="1.1" stroke="#1c1c1c" stroke-width="0.7" fill="none"/>
<ellipse cx="297.4" cy="616.4" rx="1.5" ry="1.1" stroke="#1c1c1c" stroke-width="0.7" fill="none"/>
<ellipse cx="203.2" cy="668.6" rx="1.5" ry="1.1" stroke="#1c1c1c" stroke-width="0.7" fill="none"/>
<ellipse cx="250.6" cy="642.6" rx="1.5" ry="1.1" stroke="#1c1c1c" stroke-width="0.7" fill="none"/>
<path d="M152.4 698.8Q168 694 176 684.6" stroke="#1c1c1c" stroke-width="0.7" fill="none"/>
<path d="M195.4 673.6Q211 669 220 659" stroke="#1c1c1c" stroke-width="0.7" fill="none"/>
<path d="M240 647.6Q256 643 265 633" stroke="#1c1c1c" stroke-width="0.7" fill="none"/>
<path d="M288.4 620Q303 615.6 311 607" stroke="#1c1c1c" stroke-width="0.7" fill="none"/>
<path d="M102.6 671.2L141 694.4" stroke="#1c1c1c" stroke-width="0.7" fill="none"/>
<path d="M378.6 609V620.5" stroke="#777" stroke-width="0.9"/>
<rect x="330.5" y="620.5" width="93" height="96" fill="#fff" stroke="#888" stroke-width="0.9"/>
<text x="373.8" y="604.2" font-size="8.2" fill="#333">24</text>
<text x="322" y="557.2" font-size="8.2" fill="#333">21</text>
<path d="M321.8 559.5L314.8 568.9" stroke="#444" stroke-width="0.7"/>
<text x="376.8" y="633" text-anchor="middle" font-size="10" fill="#111">Valve Train Kit</text>
<text x="376.8" y="652.4" text-anchor="middle" font-size="10" fill="#111">Kit Soupapes</text>
<text x="376.8" y="671.8" text-anchor="middle" font-size="10" fill="#111">Ventilsatz</text>
<text x="376.8" y="691" text-anchor="middle" font-size="10" fill="#111">Kits Treno Valvole</text>
<text x="376.8" y="710.2" text-anchor="middle" font-size="10" fill="#111">Juego de Valvulas</text>
</svg>
<div id="thead"></div>
<div class="hs" style="left:506px"></div>
<div class="vs" style="left:506px"></div>
<div class="hs" style="left:577px"></div>
<div class="vs" style="left:577px"></div>
<div class="hs" style="left:607px"></div>
<div class="vs" style="left:607px"></div>
<div class="hs" style="left:671px"></div>
<div class="vs" style="left:671px"></div>
<div class="hs" style="left:707px"></div>
<div class="vs" style="left:707px"></div>
<div class="hs" style="left:796px"></div>
<div class="vs" style="left:796px"></div>
<div class="hs" style="left:950px"></div>
<div class="vs" style="left:950px"></div>
<div class="hs" style="left:1013px"></div>
<div class="vs" style="left:1013px"></div>
<div class="hs" style="left:1056px"></div>
<div class="vs" style="left:1056px"></div>
<div id="t2" class="ht" style="left:511.99px;top:21px;transform:scaleX(0.8940);">Symbol(s)</div>
<div id="t3" class="ht" style="left:581.41px;top:21px;transform:scaleX(0.9439);">Item</div>
<div id="t4" class="ht" style="left:612.80px;top:21px;transform:scaleX(0.9219);">Parts No.</div>
<div id="t5" class="ht" style="left:677.03px;top:21px;transform:scaleX(0.9666);">Qty.</div>
<div id="t6" class="ht" style="left:712.33px;top:21px;transform:scaleX(0.9340);">Latest Part No.</div>
<div id="t7" class="ht" style="left:801.62px;top:21px;transform:scaleX(0.9885);">Description</div>
<div id="t8" class="ht" style="left:955.93px;top:21px;transform:scaleX(0.9722);">Cut Out</div>
<div id="t9" class="ht" style="left:1018.99px;top:21px;transform:scaleX(0.9582);">Cut In</div>
<div id="t10" class="ht" style="left:1062.05px;top:21px;transform:scaleX(0.9269);">Comment</div>
<svg class="ic" style="left:463px;top:23px" width="17" height="17" viewBox="0 0 17 17"><use href="#i-search"/></svg>
<div class="hl" style="top:60px"></div>
<svg class="ic" style="left:450px;top:44px" width="12" height="12" viewBox="0 0 12 12"><use href="#i-gear"/></svg>
<svg class="ic" style="left:466.5px;top:42.5px" width="15" height="15" viewBox="0 0 15 15"><use href="#i-info"/></svg>
<div id="t11" class="ct" style="left:580.25px;top:40px;transform:scaleX(0.9700);">2</div>
<div id="t12" class="ct" style="left:674.53px;top:40px;transform:scaleX(0.9700);">1</div>
<div id="t13" class="ct" style="left:799.98px;top:40px;transform:scaleX(0.9049);">CYLINDER HEAD</div>
<div class="hl" style="top:80px"></div>
<svg class="ic" style="left:449px;top:63px" width="15" height="15" viewBox="0 0 15 15"><use href="#i-gears"/></svg>
<svg class="ic" style="left:466.5px;top:62.5px" width="15" height="15" viewBox="0 0 15 15"><use href="#i-info"/></svg>
<div id="t14" class="ct" style="left:580.25px;top:60px;transform:scaleX(0.9700);">2</div>
<div id="t15" class="ct" style="left:674.53px;top:60px;transform:scaleX(0.9700);">1</div>
<div id="t16" class="ct" style="left:799.98px;top:60px;transform:scaleX(0.9019);">CYLINDER HEAD ASSEMBLY</div>
<div class="hl" style="top:100px"></div>
<svg class="ic" style="left:449px;top:83px" width="15" height="15" viewBox="0 0 15 15"><use href="#i-gears"/></svg>
<svg class="ic" style="left:466.5px;top:82.5px" width="15" height="15" viewBox="0 0 15 15"><use href="#i-info"/></svg>
<div id="t17" class="ct" style="left:580.25px;top:80px;transform:scaleX(0.9700);">2</div>
<div id="t18" class="ct" style="left:674.53px;top:80px;transform:scaleX(0.9700);">1</div>
<div id="t19" class="ct" style="left:799.98px;top:80px;transform:scaleX(0.9019);">CYLINDER HEAD ASSEMBLY</div>
<div class="hl" style="top:120px"></div>
<svg class="ic" style="left:450px;top:104px" width="12" height="12" viewBox="0 0 12 12"><use href="#i-gear"/></svg>
<svg class="ic" style="left:465.8px;top:101.6px" width="17" height="16" viewBox="0 0 17 16"><use href="#i-cart"/></svg>
<svg class="ic" style="left:484.5px;top:102.5px" width="15" height="15" viewBox="0 0 15 15"><use href="#i-info"/></svg>
<div id="t20" class="ct" style="left:580.00px;top:100px;transform:scaleX(0.9700);">3</div>
<div id="t21" class="ct" style="left:611.25px;top:100px;transform:scaleX(0.9840);">3313A012</div>
<div id="t22" class="ct" style="left:675.18px;top:100px;transform:scaleX(0.9700);">4</div>
<div id="t23" class="ct" style="left:711.25px;top:100px;transform:scaleX(0.9840);">3313A012</div>
<div id="t24" class="ct" style="left:799.94px;top:100px;transform:scaleX(0.9465);">VALVE GUIDE</div>
<div class="hl" style="top:140px"></div>
<svg class="ic" style="left:450px;top:124px" width="12" height="12" viewBox="0 0 12 12"><use href="#i-gear"/></svg>
<svg class="ic" style="left:465.8px;top:121.6px" width="17" height="16" viewBox="0 0 17 16"><use href="#i-cart"/></svg>
<svg class="ic" style="left:484.5px;top:122.5px" width="15" height="15" viewBox="0 0 15 15"><use href="#i-info"/></svg>
<div id="t25" class="ct" style="left:580.28px;top:120px;transform:scaleX(0.9700);">4</div>
<div id="t26" class="ct" style="left:611.25px;top:120px;transform:scaleX(0.9840);">3313A012</div>
<div id="t27" class="ct" style="left:675.18px;top:120px;transform:scaleX(0.9700);">4</div>
<div id="t28" class="ct" style="left:711.25px;top:120px;transform:scaleX(0.9840);">3313A012</div>
<div id="t29" class="ct" style="left:799.94px;top:120px;transform:scaleX(0.9465);">VALVE GUIDE</div>
<div class="hl" style="top:160px"></div>
<svg class="ic" style="left:450px;top:144px" width="12" height="12" viewBox="0 0 12 12"><use href="#i-gear"/></svg>
<svg class="ic" style="left:465.8px;top:141.6px" width="17" height="16" viewBox="0 0 17 16"><use href="#i-cart"/></svg>
<svg class="ic" style="left:484.5px;top:142.5px" width="15" height="15" viewBox="0 0 15 15"><use href="#i-info"/></svg>
<div id="t30" class="ct" style="left:580.01px;top:140px;transform:scaleX(0.9700);">5</div>
<div id="t31" class="ct" style="left:611.32px;top:140px;transform:scaleX(0.9647);">3314A221</div>
<div id="t32" class="ct" style="left:675.18px;top:140px;transform:scaleX(0.9700);">4</div>
<div id="t33" class="ct" style="left:711.32px;top:140px;transform:scaleX(0.9647);">3314A221</div>
<div id="t34" class="ct" style="left:800.41px;top:140px;transform:scaleX(0.9113);">VALVE SEAT INSERT</div>
<div class="hl" style="top:180px"></div>
<svg class="ic" style="left:450px;top:164px" width="12" height="12" viewBox="0 0 12 12"><use href="#i-gear"/></svg>
<svg class="ic" style="left:465.8px;top:161.6px" width="17" height="16" viewBox="0 0 17 16"><use href="#i-cart"/></svg>
<svg class="ic" style="left:484.5px;top:162.5px" width="15" height="15" viewBox="0 0 15 15"><use href="#i-info"/></svg>
<div id="t35" class="ct" style="left:579.60px;top:160px;transform:scaleX(0.9700);">6</div>
<div id="t36" class="ct" style="left:611.32px;top:160px;transform:scaleX(0.9647);">3314A231</div>
<div id="t37" class="ct" style="left:675.18px;top:160px;transform:scaleX(0.9700);">4</div>
<div id="t38" class="ct" style="left:711.32px;top:160px;transform:scaleX(0.9647);">3314A231</div>
<div id="t39" class="ct" style="left:800.41px;top:160px;transform:scaleX(0.9113);">VALVE SEAT INSERT</div>
<div class="hl" style="top:200px"></div>
<svg class="ic" style="left:450px;top:184px" width="12" height="12" viewBox="0 0 12 12"><use href="#i-gear"/></svg>
<svg class="ic" style="left:465.8px;top:181.6px" width="17" height="16" viewBox="0 0 17 16"><use href="#i-cart"/></svg>
<svg class="ic" style="left:484.5px;top:182.5px" width="15" height="15" viewBox="0 0 15 15"><use href="#i-info"/></svg>
<div id="t40" class="ct" style="left:579.83px;top:180px;transform:scaleX(0.9700);">7</div>
<div id="t41" class="ct" style="left:611.21px;top:180px;transform:scaleX(0.9956);">32416117</div>
<div id="t42" class="ct" style="left:675.15px;top:180px;transform:scaleX(0.9700);">2</div>
<div id="t43" class="ct" style="left:711.21px;top:180px;transform:scaleX(0.9956);">32416117</div>
<div id="t44" class="ct" style="left:799.91px;top:180px;transform:scaleX(0.8931);">PLUG</div>
<div class="hl" style="top:220px"></div>
<svg class="ic" style="left:450px;top:204px" width="12" height="12" viewBox="0 0 12 12"><use href="#i-gear"/></svg>
<svg class="ic" style="left:465.8px;top:201.6px" width="17" height="16" viewBox="0 0 17 16"><use href="#i-cart"/></svg>
<svg class="ic" style="left:484.5px;top:202.5px" width="15" height="15" viewBox="0 0 15 15"><use href="#i-info"/></svg>
<div id="t45" class="ct" style="left:579.67px;top:200px;transform:scaleX(0.9700);">8</div>
<div id="t46" class="ct" style="left:610.85px;top:200px;transform:scaleX(0.9765);">0650588</div>
<div id="t47" class="ct" style="left:675.18px;top:200px;transform:scaleX(0.9700);">4</div>
<div id="t48" class="ct" style="left:710.85px;top:200px;transform:scaleX(0.9765);">0650588</div>
<div id="t49" class="ct" style="left:799.91px;top:200px;transform:scaleX(0.8931);">PLUG</div>
<div class="hl" style="top:240px"></div>
<svg class="ic" style="left:450px;top:224px" width="12" height="12" viewBox="0 0 12 12"><use href="#i-gear"/></svg>
<svg class="ic" style="left:465.8px;top:221.6px" width="17" height="16" viewBox="0 0 17 16"><use href="#i-cart"/></svg>
<svg class="ic" style="left:484.5px;top:222.5px" width="15" height="15" viewBox="0 0 15 15"><use href="#i-info"/></svg>
<div id="t50" class="ct" style="left:579.67px;top:220px;transform:scaleX(0.9700);">9</div>
<div id="t51" class="ct" style="left:611.30px;top:220px;transform:scaleX(0.9718);">3142H101</div>
<div id="t52" class="ct" style="left:675.18px;top:220px;transform:scaleX(0.9700);">4</div>
<div id="t53" class="ct" style="left:711.30px;top:220px;transform:scaleX(0.9718);">3142H101</div>
<div id="t54" class="ct" style="left:799.80px;top:220px;transform:scaleX(0.9420);">INTAKE VALVE</div>
<div class="hl" style="top:260px"></div>
<svg class="ic" style="left:450px;top:244px" width="12" height="12" viewBox="0 0 12 12"><use href="#i-gear"/></svg>
<svg class="ic" style="left:465.8px;top:241.6px" width="17" height="16" viewBox="0 0 17 16"><use href="#i-cart"/></svg>
<svg class="ic" style="left:484.5px;top:242.5px" width="15" height="15" viewBox="0 0 15 15"><use href="#i-info"/></svg>
<svg class="ic" style="left:510px;top:241px" width="16" height="16" viewBox="0 0 16 16"><use href="#i-bubble"/></svg>
<div id="t55" class="ct" style="left:579.60px;top:240px;transform:scaleX(0.9700);">10</div>
<div id="t56" class="ct" style="left:611.42px;top:240px;transform:scaleX(1.0058);">2418M519</div>
<div id="t57" class="ct" style="left:675.18px;top:240px;transform:scaleX(0.9700);">4</div>
<div id="t58" class="ct" style="left:711.42px;top:240px;transform:scaleX(1.0058);">2418M519</div>
<div id="t59" class="ct" style="left:800.27px;top:240px;transform:scaleX(0.9244);">SEAL - VALVE STEM</div>
<div class="hl" style="top:280px"></div>
<svg class="ic" style="left:450px;top:264px" width="12" height="12" viewBox="0 0 12 12"><use href="#i-gear"/></svg>
<svg class="ic" style="left:465.8px;top:261.6px" width="17" height="16" viewBox="0 0 17 16"><use href="#i-cart"/></svg>
<svg class="ic" style="left:484.5px;top:262.5px" width="15" height="15" viewBox="0 0 15 15"><use href="#i-info"/></svg>
<div id="t60" class="ct" style="left:579.57px;top:260px;transform:scaleX(0.9700);">11</div>
<div id="t61" class="ct" style="left:610.94px;top:260px;transform:scaleX(0.9617);">T417479</div>
<div id="t62" class="ct" style="left:675.18px;top:260px;transform:scaleX(0.9700);">4</div>
<div id="t63" class="ct" style="left:710.94px;top:260px;transform:scaleX(0.9617);">T417479</div>
<div id="t64" class="ct" style="left:800.41px;top:260px;transform:scaleX(0.9241);">VALVE SPRING</div>
<div class="hl" style="top:300px"></div>
<svg class="ic" style="left:450px;top:284px" width="12" height="12" viewBox="0 0 12 12"><use href="#i-gear"/></svg>
<svg class="ic" style="left:465.8px;top:281.6px" width="17" height="16" viewBox="0 0 17 16"><use href="#i-cart"/></svg>
<svg class="ic" style="left:484.5px;top:282.5px" width="15" height="15" viewBox="0 0 15 15"><use href="#i-info"/></svg>
<div id="t65" class="ct" style="left:579.60px;top:280px;transform:scaleX(0.9700);">12</div>
<div id="t66" class="ct" style="left:611.32px;top:280px;transform:scaleX(0.9631);">3342A021</div>
<div id="t67" class="ct" style="left:675.18px;top:280px;transform:scaleX(0.9700);">4</div>
<div id="t68" class="ct" style="left:711.32px;top:280px;transform:scaleX(0.9631);">3342A021</div>
<div id="t69" class="ct" style="left:799.98px;top:280px;transform:scaleX(0.9185);">CAP</div>
<div class="hl" style="top:320px"></div>
<svg class="ic" style="left:450px;top:304px" width="12" height="12" viewBox="0 0 12 12"><use href="#i-gear"/></svg>
<svg class="ic" style="left:465.8px;top:301.6px" width="17" height="16" viewBox="0 0 17 16"><use href="#i-cart"/></svg>
<svg class="ic" style="left:484.5px;top:302.5px" width="15" height="15" viewBox="0 0 15 15"><use href="#i-info"/></svg>
<div id="t70" class="ct" style="left:579.58px;top:300px;transform:scaleX(0.9700);">13</div>
<div id="t71" class="ct" style="left:611.10px;top:300px;transform:scaleX(0.9828);">2714A002</div>
<div id="t72" class="ct" style="left:674.57px;top:300px;transform:scaleX(0.9700);">8</div>
<div id="t73" class="ct" style="left:711.10px;top:300px;transform:scaleX(0.9828);">2714A002</div>
<div id="t74" class="ct" style="left:800.41px;top:300px;transform:scaleX(0.9031);">VALVE COLLET</div>
<div class="selrow" style="top:321px"></div>
<div class="selsep" style="left:506px;top:321px"></div>
<div class="selsep" style="left:577px;top:321px"></div>
<div class="selsep" style="left:607px;top:321px"></div>
<div class="selsep" style="left:671px;top:321px"></div>
<div class="selsep" style="left:707px;top:321px"></div>
<div class="selsep" style="left:796px;top:321px"></div>
<div class="selsep" style="left:950px;top:321px"></div>
<div class="selsep" style="left:1013px;top:321px"></div>
<div class="selsep" style="left:1056px;top:321px"></div>
<div class="hl" style="top:340px"></div>
<svg class="ic" style="left:450px;top:324px" width="12" height="12" viewBox="0 0 12 12"><use href="#i-gear-sel"/></svg>
<svg class="ic" style="left:465.8px;top:321.6px" width="17" height="16" viewBox="0 0 17 16"><use href="#i-cart-sel"/></svg>
<svg class="ic" style="left:484.5px;top:322.5px" width="15" height="15" viewBox="0 0 15 15"><use href="#i-info-sel"/></svg>
<div id="t75" class="ct sel" style="left:579.58px;top:320px;transform:scaleX(0.9700);">14</div>
<div id="t76" class="ct sel" style="left:610.57px;top:320px;transform:scaleX(0.9629);">3142A171</div>
<div id="t77" class="ct sel" style="left:675.18px;top:320px;transform:scaleX(0.9700);">4</div>
<div id="t78" class="ct sel" style="left:710.57px;top:320px;transform:scaleX(0.9629);">3142A171</div>
<div id="t79" class="ct sel" style="left:799.09px;top:320px;transform:scaleX(0.9254);">EXHAUST VALVE</div>
<div class="hl" style="top:360px"></div>
<svg class="ic" style="left:450px;top:344px" width="12" height="12" viewBox="0 0 12 12"><use href="#i-gear"/></svg>
<svg class="ic" style="left:465.8px;top:341.6px" width="17" height="16" viewBox="0 0 17 16"><use href="#i-cart"/></svg>
<svg class="ic" style="left:484.5px;top:342.5px" width="15" height="15" viewBox="0 0 15 15"><use href="#i-info"/></svg>
<svg class="ic" style="left:510px;top:341px" width="16" height="16" viewBox="0 0 16 16"><use href="#i-bubble"/></svg>
<div id="t80" class="ct" style="left:579.60px;top:340px;transform:scaleX(0.9700);">15</div>
<div id="t81" class="ct" style="left:611.46px;top:340px;transform:scaleX(0.9938);">2418M517</div>
<div id="t82" class="ct" style="left:675.18px;top:340px;transform:scaleX(0.9700);">4</div>
<div id="t83" class="ct" style="left:711.46px;top:340px;transform:scaleX(0.9938);">2418M517</div>
<div id="t84" class="ct" style="left:800.27px;top:340px;transform:scaleX(0.9244);">SEAL - VALVE STEM</div>
<div class="hl" style="top:380px"></div>
<svg class="ic" style="left:450px;top:364px" width="12" height="12" viewBox="0 0 12 12"><use href="#i-gear"/></svg>
<svg class="ic" style="left:465.8px;top:361.6px" width="17" height="16" viewBox="0 0 17 16"><use href="#i-cart"/></svg>
<svg class="ic" style="left:484.5px;top:362.5px" width="15" height="15" viewBox="0 0 15 15"><use href="#i-info"/></svg>
<div id="t85" class="ct" style="left:579.60px;top:360px;transform:scaleX(0.9700);">16</div>
<div id="t86" class="ct" style="left:610.94px;top:360px;transform:scaleX(0.9617);">T417479</div>
<div id="t87" class="ct" style="left:675.18px;top:360px;transform:scaleX(0.9700);">4</div>
<div id="t88" class="ct" style="left:710.94px;top:360px;transform:scaleX(0.9617);">T417479</div>
<div id="t89" class="ct" style="left:800.41px;top:360px;transform:scaleX(0.9241);">VALVE SPRING</div>
<div class="hl" style="top:400px"></div>
<svg class="ic" style="left:450px;top:384px" width="12" height="12" viewBox="0 0 12 12"><use href="#i-gear"/></svg>
<svg class="ic" style="left:465.8px;top:381.6px" width="17" height="16" viewBox="0 0 17 16"><use href="#i-cart"/></svg>
<svg class="ic" style="left:484.5px;top:382.5px" width="15" height="15" viewBox="0 0 15 15"><use href="#i-info"/></svg>
<div id="t90" class="ct" style="left:579.60px;top:380px;transform:scaleX(0.9700);">17</div>
<div id="t91" class="ct" style="left:611.32px;top:380px;transform:scaleX(0.9631);">3342A021</div>
<div id="t92" class="ct" style="left:675.18px;top:380px;transform:scaleX(0.9700);">4</div>
<div id="t93" class="ct" style="left:711.32px;top:380px;transform:scaleX(0.9631);">3342A021</div>
<div id="t94" class="ct" style="left:799.98px;top:380px;transform:scaleX(0.9185);">CAP</div>
<div class="hl" style="top:420px"></div>
<svg class="ic" style="left:450px;top:404px" width="12" height="12" viewBox="0 0 12 12"><use href="#i-gear"/></svg>
<svg class="ic" style="left:465.8px;top:401.6px" width="17" height="16" viewBox="0 0 17 16"><use href="#i-cart"/></svg>
<svg class="ic" style="left:484.5px;top:402.5px" width="15" height="15" viewBox="0 0 15 15"><use href="#i-info"/></svg>
<div id="t95" class="ct" style="left:579.60px;top:400px;transform:scaleX(0.9700);">18</div>
<div id="t96" class="ct" style="left:611.10px;top:400px;transform:scaleX(0.9828);">2714A002</div>
<div id="t97" class="ct" style="left:674.57px;top:400px;transform:scaleX(0.9700);">8</div>
<div id="t98" class="ct" style="left:711.10px;top:400px;transform:scaleX(0.9828);">2714A002</div>
<div id="t99" class="ct" style="left:800.41px;top:400px;transform:scaleX(0.9031);">VALVE COLLET</div>
<div class="hl" style="top:440px"></div>
<svg class="ic" style="left:450px;top:424px" width="12" height="12" viewBox="0 0 12 12"><use href="#i-gear"/></svg>
<svg class="ic" style="left:465.8px;top:421.6px" width="17" height="16" viewBox="0 0 17 16"><use href="#i-cart"/></svg>
<svg class="ic" style="left:484.5px;top:422.5px" width="15" height="15" viewBox="0 0 15 15"><use href="#i-info"/></svg>
<div id="t100" class="ct" style="left:579.60px;top:420px;transform:scaleX(0.9700);">19</div>
<div id="t101" class="ct" style="left:611.10px;top:420px;transform:scaleX(0.9779);">2431154</div>
<div id="t102" class="ct" style="left:675.15px;top:420px;transform:scaleX(0.9700);">2</div>
<div id="t103" class="ct" style="left:711.10px;top:420px;transform:scaleX(0.9779);">2431154</div>
<div id="t104" class="ct" style="left:799.91px;top:420px;transform:scaleX(0.8931);">PLUG</div>
<div class="hl" style="top:460px"></div>
<svg class="ic" style="left:450px;top:444px" width="12" height="12" viewBox="0 0 12 12"><use href="#i-gear"/></svg>
<svg class="ic" style="left:465.8px;top:441.6px" width="17" height="16" viewBox="0 0 17 16"><use href="#i-cart"/></svg>
<svg class="ic" style="left:484.5px;top:442.5px" width="15" height="15" viewBox="0 0 15 15"><use href="#i-info"/></svg>
<div id="t105" class="ct" style="left:580.25px;top:440px;transform:scaleX(0.9700);">20</div>
<div id="t106" class="ct" style="left:610.94px;top:440px;transform:scaleX(0.9647);">T423993</div>
<div id="t107" class="ct" style="left:674.53px;top:440px;transform:scaleX(0.9700);">1</div>
<div id="t108" class="ct" style="left:710.94px;top:440px;transform:scaleX(0.9647);">T423993</div>
<div id="t109" class="ct" style="left:799.91px;top:440px;transform:scaleX(0.8931);">PLUG</div>
<svg style="left:1100px;top:695px" width="48" height="53" viewBox="1100 695 48 53">
<circle cx="1117.0" cy="707.8" r="6.65" fill="none" stroke="#0b4ea2" stroke-width="2.5"/>
<path d="M1111.4 713.4L1122.6 702.1999999999999" stroke="#0b4ea2" stroke-width="2.4" stroke-linecap="butt"/>
<circle cx="1133.2" cy="707.8" r="6.65" fill="none" stroke="#0b4ea2" stroke-width="2.5"/>
<path d="M1127.6000000000001 702.1999999999999L1138.8 713.4" stroke="#0b4ea2" stroke-width="2.4" stroke-linecap="butt"/>
<circle cx="1117.0" cy="725.1" r="6.65" fill="none" stroke="#0b4ea2" stroke-width="2.5"/>
<path d="M1111.4 719.5L1122.6 730.7" stroke="#0b4ea2" stroke-width="2.4" stroke-linecap="butt"/>
<circle cx="1133.2" cy="725.1" r="6.65" fill="none" stroke="#0b4ea2" stroke-width="2.5"/>
<path d="M1127.6000000000001 730.7L1138.8 719.5" stroke="#0b4ea2" stroke-width="2.4" stroke-linecap="butt"/>
<path d="M1125.1 699.4L1127.3 703.4L1125.1 707L1122.8999999999999 703.4Z" fill="#0b4ea2"/>
<path d="M1125.1 733.6L1127.3 729.6L1125.1 726L1122.8999999999999 729.6Z" fill="#0b4ea2"/>
<path d="M1108.0 716.45L1112 714.25L1115.6 716.45L1112 718.6500000000001Z" fill="#0b4ea2"/>
<path d="M1141.4 716.45L1137.4 714.25L1133.8 716.45L1137.4 718.6500000000001Z" fill="#0b4ea2"/>
<text x="1107.0" y="745.4" font-family="Liberation Sans,sans-serif" font-weight="bold" font-size="10.6" fill="#0b4ea2" textLength="37" lengthAdjust="spacingAndGlyphs">Perkins</text>
<circle cx="1145.6" cy="740.2" r="0.6" fill="#0b4ea2"/>
</svg>
</body></html>
